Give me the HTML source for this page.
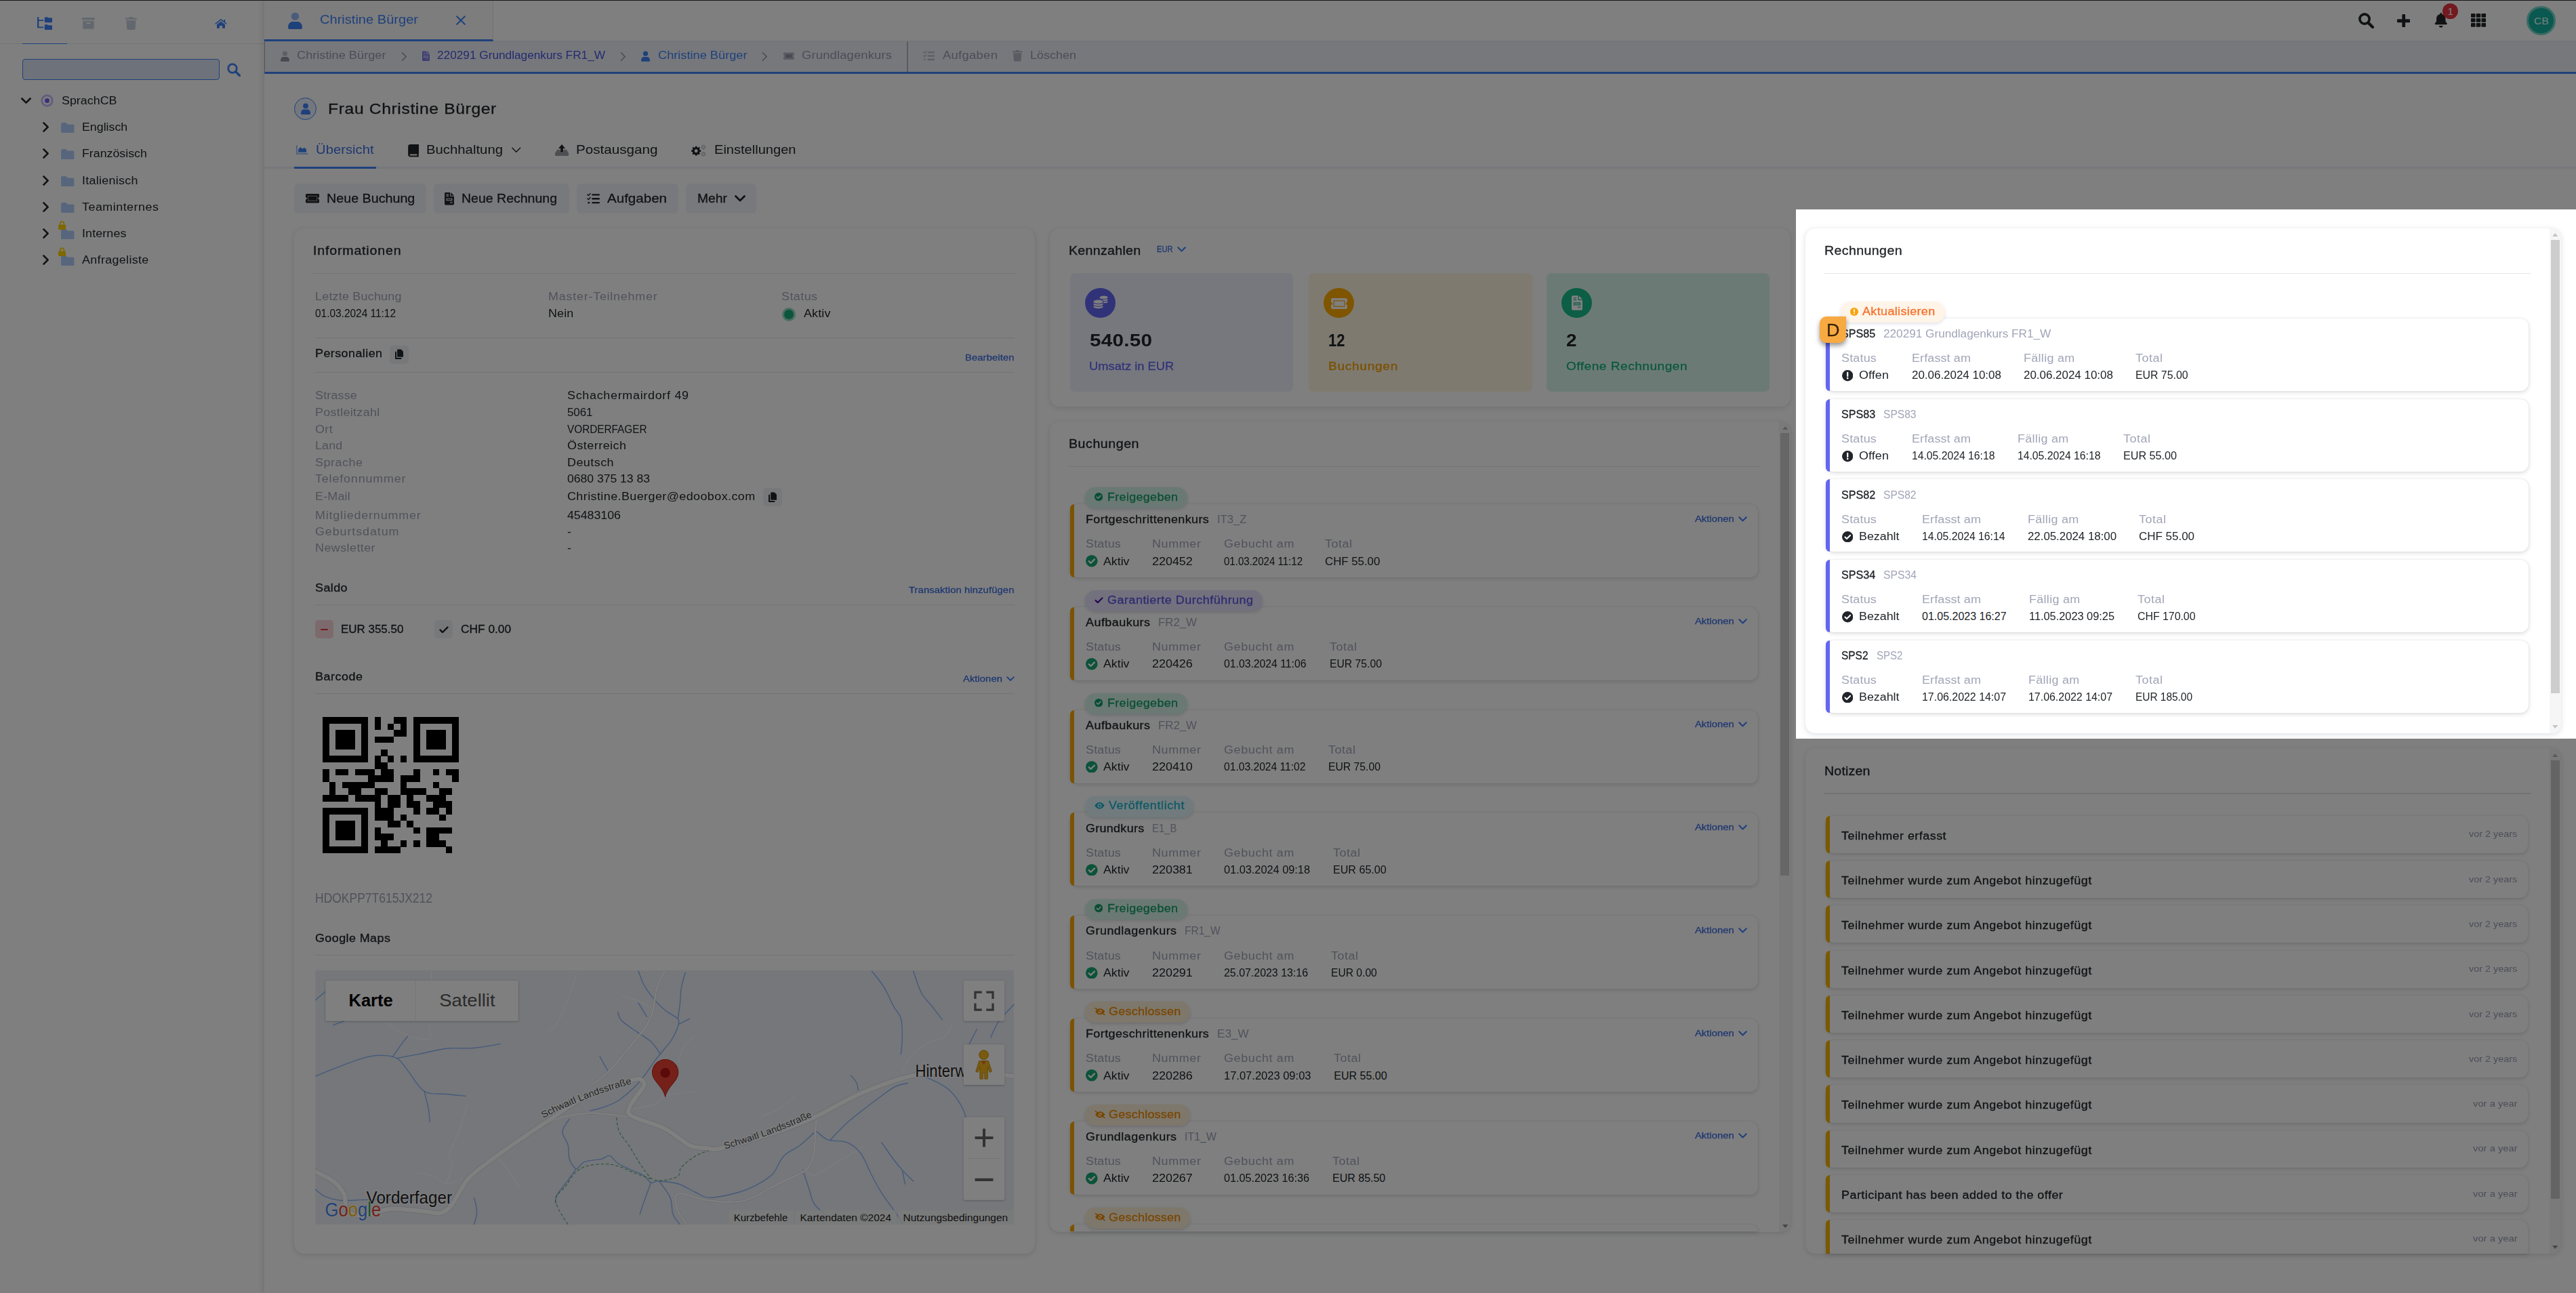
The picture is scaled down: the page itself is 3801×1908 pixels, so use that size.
<!DOCTYPE html>
<html lang="de"><head><meta charset="utf-8"><title>Frau Christine Bürger</title>
<style>
html,body{margin:0;padding:0;}
body{width:3801px;height:1908px;overflow:hidden;position:relative;background:#fff;font-family:"Liberation Sans",sans-serif;}
#root{position:absolute;left:0;top:0;width:3801px;height:1908px;overflow:hidden;}
#root div,#root svg,#root span.t{position:absolute;box-sizing:border-box;}
#root span.t{white-space:nowrap;transform-origin:0 50%;display:block;}
</style></head><body><div id="root">
<div style="left:0.0px;top:0.0px;width:390.0px;height:1908.0px;background:#fff;"></div>
<div style="left:0.0px;top:63.6px;width:390.0px;height:1.2px;background:#e5e6ea;"></div>
<div style="left:33.0px;top:63.6px;width:66.0px;height:1.4px;background:#3f82f7;"></div>
<svg style="left:55.0px;top:24.8px;" width="22.0" height="19.3" viewBox="0 0 22 19"><path d="M0 0h2.300v4h7v1.900h-7v8.400h7v1.900H0z" fill="#3f82f7"/><path d="M11.800 0h3.300l1.300 1.200H21a1 1 0 0 1 1 1V7a1 1 0 0 1-1 1h-9.200a1 1 0 0 1-1-1V1a1 1 0 0 1 1-1zM11.800 11h3.300l1.300 1.200H21a1 1 0 0 1 1 1V18a1 1 0 0 1-1 1h-9.200a1 1 0 0 1-1-1v-6a1 1 0 0 1 1-1z" fill="#3f82f7"/></svg>
<svg style="left:121.0px;top:26.2px;" width="19.0" height="16.8" viewBox="0 0 19 17"><rect x="0" y="0" width="19" height="3.400" rx=".6" fill="#c7cfdc"/><path d="M1.200 4.800h16.600V16a1 1 0 0 1-1 1H2.200a1 1 0 0 1-1-1zM7 7.300a.5.500 0 0 0-.5.500v.700a.5.500 0 0 0 .5.500h5a.5.500 0 0 0 .5-.5v-.7a.5.500 0 0 0-.5-.5z" fill="#c7cfdc" fill-rule="evenodd"/></svg>
<svg style="left:185.2px;top:25.2px;" width="16.8" height="19.0" viewBox="0 0 14 16"><path d="M0 1.200h4.200L5 0h4l.8 1.200H14v1.900H0zM1 4.200h12l-.7 10.300A1.600 1.600 0 0 1 10.700 16H3.300a1.600 1.600 0 0 1-1.600-1.500z" fill="#c7cfdc"/></svg>
<svg style="left:317.0px;top:27.0px;" width="18.0" height="15.5" viewBox="0 0 18 15"><path d="M9 .4L.3 7.600l1 1.200L9 2.500l7.700 6.300 1-1.200-2.500-2V1.700h-2v2.200z" fill="#3f82f7"/><path d="M9 4.200l-6 4.900V14a.6.600 0 0 0 .6.600H7V10.800h4v3.800h3.400a.6.600 0 0 0 .6-.6V9.100z" fill="#3f82f7"/></svg>
<div style="left:33.0px;top:87.0px;width:291.0px;height:30.5px;background:#dce6f7;border:1.500px solid #3f82f7;border-radius:4px;"></div>
<svg style="left:335.0px;top:93.0px;" width="20.0" height="20.0" viewBox="0 0 20 20"><circle cx="8" cy="8" r="6.300" fill="none" stroke="#3f82f7" stroke-width="2.8"/><path d="M12.800 12.800L18.500 18.500" stroke="#3f82f7" stroke-width="3.4" stroke-linecap="round"/></svg>
<svg style="left:31.0px;top:143.5px;" width="15.0" height="9.5" viewBox="0 0 16 10"><path d="M1.5 1.5L8 8l6.5-6.500" fill="none" stroke="#212529" stroke-width="2.8" stroke-linecap="round" stroke-linejoin="round"/></svg>
<svg style="left:60.0px;top:138.5px;" width="19.0" height="19.0" viewBox="0 0 19 19"><circle cx="9.5" cy="9.5" r="7.700" fill="none" stroke="#c9bafc" stroke-width="3"/><circle cx="9.5" cy="9.5" r="3.500" fill="#7260f5"/></svg>
<span class="t" style="left:90.5px;top:137.7px;font-size:16px;line-height:21px;color:#212529;transform:scaleX(1.1176);">SprachCB</span>
<svg style="left:63.0px;top:179.5px;" width="9.5" height="15.0" viewBox="0 0 10 16"><path d="M1.5 1.5L8 8l-6.500 6.500" fill="none" stroke="#212529" stroke-width="2.8" stroke-linecap="round" stroke-linejoin="round"/></svg>
<svg style="left:90.0px;top:180.5px;" width="19.5" height="15.5" viewBox="0 0 20 16"><path d="M2 0h5.500l2.500 2.500H18a2 2 0 0 1 2 2V14a2 2 0 0 1-2 2H2a2 2 0 0 1-2-2V2a2 2 0 0 1 2-2z" fill="#b0cdfb"/></svg>
<span class="t" style="left:120.7px;top:176.7px;font-size:16px;line-height:21px;color:#212529;transform:scaleX(1.1111);">Englisch</span>
<svg style="left:63.0px;top:218.5px;" width="9.5" height="15.0" viewBox="0 0 10 16"><path d="M1.5 1.5L8 8l-6.500 6.500" fill="none" stroke="#212529" stroke-width="2.8" stroke-linecap="round" stroke-linejoin="round"/></svg>
<svg style="left:90.0px;top:219.5px;" width="19.5" height="15.5" viewBox="0 0 20 16"><path d="M2 0h5.500l2.500 2.500H18a2 2 0 0 1 2 2V14a2 2 0 0 1-2 2H2a2 2 0 0 1-2-2V2a2 2 0 0 1 2-2z" fill="#b0cdfb"/></svg>
<span class="t" style="left:120.7px;top:215.7px;font-size:16px;line-height:21px;color:#212529;transform:scaleX(1.1119);">Französisch</span>
<svg style="left:63.0px;top:258.5px;" width="9.5" height="15.0" viewBox="0 0 10 16"><path d="M1.5 1.5L8 8l-6.500 6.500" fill="none" stroke="#212529" stroke-width="2.8" stroke-linecap="round" stroke-linejoin="round"/></svg>
<svg style="left:90.0px;top:259.5px;" width="19.5" height="15.5" viewBox="0 0 20 16"><path d="M2 0h5.500l2.500 2.500H18a2 2 0 0 1 2 2V14a2 2 0 0 1-2 2H2a2 2 0 0 1-2-2V2a2 2 0 0 1 2-2z" fill="#b0cdfb"/></svg>
<span class="t" style="left:120.7px;top:255.7px;font-size:16px;line-height:21px;color:#212529;letter-spacing:0.24px;transform:scaleX(1.1200);">Italienisch</span>
<svg style="left:63.0px;top:297.5px;" width="9.5" height="15.0" viewBox="0 0 10 16"><path d="M1.5 1.5L8 8l-6.500 6.500" fill="none" stroke="#212529" stroke-width="2.8" stroke-linecap="round" stroke-linejoin="round"/></svg>
<svg style="left:90.0px;top:298.5px;" width="19.5" height="15.5" viewBox="0 0 20 16"><path d="M2 0h5.500l2.500 2.500H18a2 2 0 0 1 2 2V14a2 2 0 0 1-2 2H2a2 2 0 0 1-2-2V2a2 2 0 0 1 2-2z" fill="#b0cdfb"/></svg>
<span class="t" style="left:120.7px;top:294.7px;font-size:16px;line-height:21px;color:#212529;letter-spacing:0.43px;transform:scaleX(1.1200);">Teaminternes</span>
<svg style="left:63.0px;top:336.5px;" width="9.5" height="15.0" viewBox="0 0 10 16"><path d="M1.5 1.5L8 8l-6.500 6.500" fill="none" stroke="#212529" stroke-width="2.8" stroke-linecap="round" stroke-linejoin="round"/></svg>
<svg style="left:90.0px;top:337.5px;" width="19.5" height="15.5" viewBox="0 0 20 16"><path d="M2 0h5.500l2.500 2.500H18a2 2 0 0 1 2 2V14a2 2 0 0 1-2 2H2a2 2 0 0 1-2-2V2a2 2 0 0 1 2-2z" fill="#b0cdfb"/></svg>
<svg style="left:85.5px;top:325.5px;" width="11.2" height="13.3" viewBox="0 0 14 16"><path d="M3.500 7V4.500a3.500 3.500 0 0 1 7 0V7" fill="none" stroke="#ffd000" stroke-width="2.2"/><rect x="0" y="6.500" width="14" height="9.500" rx="1.800" fill="#ffd000"/></svg>
<span class="t" style="left:120.7px;top:333.7px;font-size:16px;line-height:21px;color:#212529;letter-spacing:0.09px;transform:scaleX(1.1200);">Internes</span>
<svg style="left:63.0px;top:375.5px;" width="9.5" height="15.0" viewBox="0 0 10 16"><path d="M1.5 1.5L8 8l-6.500 6.500" fill="none" stroke="#212529" stroke-width="2.8" stroke-linecap="round" stroke-linejoin="round"/></svg>
<svg style="left:90.0px;top:376.5px;" width="19.5" height="15.5" viewBox="0 0 20 16"><path d="M2 0h5.500l2.500 2.500H18a2 2 0 0 1 2 2V14a2 2 0 0 1-2 2H2a2 2 0 0 1-2-2V2a2 2 0 0 1 2-2z" fill="#b0cdfb"/></svg>
<svg style="left:85.5px;top:364.5px;" width="11.2" height="13.3" viewBox="0 0 14 16"><path d="M3.500 7V4.500a3.500 3.500 0 0 1 7 0V7" fill="none" stroke="#ffd000" stroke-width="2.2"/><rect x="0" y="6.500" width="14" height="9.500" rx="1.800" fill="#ffd000"/></svg>
<span class="t" style="left:120.7px;top:372.7px;font-size:16px;line-height:21px;color:#212529;letter-spacing:0.30px;transform:scaleX(1.1200);">Anfrageliste</span>
<div style="left:390.0px;top:0.0px;width:3411.0px;height:1908.0px;background:#fff;box-shadow:-3px 0 9px rgba(0,0,0,.10);"></div>
<div style="left:390.0px;top:0.0px;width:3411.0px;height:60.5px;background:#fff;border-bottom:1.200px solid #e5e6ea;"></div>
<div style="left:390.0px;top:0.0px;width:337.5px;height:60.5px;background:#fafafa;border-right:1.200px solid #e5e6ea;border-bottom:3.200px solid #3f82f7;"></div>
<div style="left:0.0px;top:0.0px;width:3801.0px;height:1.4px;background:#2e2e2e;"></div>
<svg style="left:425.0px;top:17.5px;" width="21.0" height="25.0" viewBox="0 0 20 24"><circle cx="10" cy="6" r="5.6" fill="#3f82f7" opacity=".55"/><path d="M0 21.5c0-5.5 3.5-8 6-8h8c2.5 0 6 2.5 6 8 0 1.6-1 2.5-2.5 2.5h-15C1 24 0 23.100 0 21.5z" fill="#3f82f7"/></svg>
<span class="t" style="left:472.0px;top:17.2px;font-size:18.5px;line-height:24px;color:#3f82f7;transform:scaleX(1.0848);">Christine Bürger</span>
<svg style="left:673.0px;top:23.0px;" width="14.0" height="14.0" viewBox="0 0 14 14"><path d="M1.200 1.200l11.600 11.600M12.800 1.200L1.200 12.800" stroke="#3f82f7" stroke-width="2" stroke-linecap="round"/></svg>
<svg style="left:3480.0px;top:19.4px;" width="22.6" height="22.6" viewBox="0 0 20 20"><circle cx="8" cy="8" r="6.300" fill="none" stroke="#212529" stroke-width="3.2"/><path d="M12.800 12.800L18.500 18.500" stroke="#212529" stroke-width="3.8000000000000003" stroke-linecap="round"/></svg>
<svg style="left:3536.8px;top:20.5px;" width="19.5" height="19.5" viewBox="0 0 16 16"><path d="M8 1.300v13.400M1.300 8h13.400" stroke="#212529" stroke-width="3.900" stroke-linecap="round"/></svg>
<svg style="left:3592.0px;top:18.6px;" width="19.5" height="22.0" viewBox="0 0 16 18"><path d="M8 0a1.200 1.200 0 0 1 1.200 1.200v.5A5.500 5.500 0 0 1 13.500 7v3.300l1.800 2.400a.9.900 0 0 1-.7 1.400H1.400a.9.900 0 0 1-.7-1.400l1.800-2.400V7A5.500 5.500 0 0 1 6.800 1.700v-.5A1.200 1.200 0 0 1 8 0z" fill="#212529"/><path d="M5.800 15.500h4.400a2.200 2.200 0 0 1-4.400 0z" fill="#212529"/></svg>
<div style="left:3603.6px;top:4.7px;width:23.4px;height:23.4px;background:#e5343f;border-radius:50%;"></div>
<span class="t" style="left:3611.5px;top:6.8px;font-size:15px;line-height:20px;color:#fff;">1</span>
<svg style="left:3646.0px;top:20.2px;" width="22.0" height="19.8" viewBox="0 0 17.6 15.7"><rect x="0.0" y="0.0" width="5.200" height="4.500" rx=".5" fill="#212529"/><rect x="6.2" y="0.0" width="5.200" height="4.500" rx=".5" fill="#212529"/><rect x="12.4" y="0.0" width="5.200" height="4.500" rx=".5" fill="#212529"/><rect x="0.0" y="5.6" width="5.200" height="4.500" rx=".5" fill="#212529"/><rect x="6.2" y="5.6" width="5.200" height="4.500" rx=".5" fill="#212529"/><rect x="12.4" y="5.6" width="5.200" height="4.500" rx=".5" fill="#212529"/><rect x="0.0" y="11.2" width="5.200" height="4.500" rx=".5" fill="#212529"/><rect x="6.2" y="11.2" width="5.200" height="4.500" rx=".5" fill="#212529"/><rect x="12.4" y="11.2" width="5.200" height="4.500" rx=".5" fill="#212529"/></svg>
<div style="left:3728.4px;top:9.3px;width:42.3px;height:42.3px;background:#14b3a0;border-radius:50%;border:3px solid #74d6c8;"></div>
<span class="t" style="left:3738.5px;top:20.5px;font-size:15.5px;line-height:20px;color:#e8fffb;transform:scaleX(1.0217);">CB</span>
<div style="left:390.0px;top:61.2px;width:3411.0px;height:47.5px;background:#edf1f9;border-bottom:3.200px solid #3f82f7;border-left:1.600px solid #9aa;"></div>
<svg style="left:414.0px;top:74.5px;" width="13.0" height="16.0" viewBox="0 0 20 24"><circle cx="10" cy="6" r="5.6" fill="#8d93a3" opacity=".55"/><path d="M0 21.5c0-5.5 3.5-8 6-8h8c2.5 0 6 2.5 6 8 0 1.6-1 2.5-2.5 2.5h-15C1 24 0 23.100 0 21.5z" fill="#8d93a3"/></svg>
<span class="t" style="left:438.0px;top:71.0px;font-size:16.5px;line-height:21px;color:#969bb0;transform:scaleX(1.1030);">Christine Bürger</span>
<svg style="left:592.0px;top:75.5px;" width="9.0" height="15.0" viewBox="0 0 10 16"><path d="M1.5 1.5L8 8l-6.500 6.500" fill="none" stroke="#8d93a3" stroke-width="1.6" stroke-linecap="round" stroke-linejoin="round"/></svg>
<svg style="left:623.0px;top:74.5px;" width="11.0" height="15.5" viewBox="0 0 12 16"><path d="M1.200 0H7v4.200a.8.800 0 0 0 .8.800H12v9.800A1.200 1.200 0 0 1 10.800 16H1.200A1.200 1.200 0 0 1 0 14.800V1.200A1.200 1.200 0 0 1 1.200 0zM8 0l4 4H8z" fill="#7f7ce6"/><path d="M2 2.200h3.200v1H2zM2 4.200h3.200v1H2zM2.200 7.500h7.600v3.200H2.200zM3.200 8.500v1.200h5.600V8.500zM7 12.300h3v1H7z" fill="#d9d8fb" fill-rule="evenodd"/></svg>
<span class="t" style="left:645.0px;top:71.0px;font-size:16.5px;line-height:21px;color:#4b55dd;transform:scaleX(1.0440);">220291 Grundlagenkurs FR1_W</span>
<svg style="left:915.0px;top:75.5px;" width="9.0" height="15.0" viewBox="0 0 10 16"><path d="M1.5 1.5L8 8l-6.500 6.500" fill="none" stroke="#8d93a3" stroke-width="1.6" stroke-linecap="round" stroke-linejoin="round"/></svg>
<svg style="left:946.0px;top:74.5px;" width="13.0" height="16.0" viewBox="0 0 20 24"><circle cx="10" cy="6" r="5.6" fill="#3f82f7"/><path d="M0 21.5c0-5.5 3.5-8 6-8h8c2.5 0 6 2.5 6 8 0 1.6-1 2.5-2.5 2.5h-15C1 24 0 23.100 0 21.5z" fill="#3f82f7"/></svg>
<span class="t" style="left:970.5px;top:71.0px;font-size:16.5px;line-height:21px;color:#3f82f7;transform:scaleX(1.1030);">Christine Bürger</span>
<svg style="left:1124.0px;top:75.5px;" width="9.0" height="15.0" viewBox="0 0 10 16"><path d="M1.5 1.5L8 8l-6.500 6.500" fill="none" stroke="#8d93a3" stroke-width="1.6" stroke-linecap="round" stroke-linejoin="round"/></svg>
<svg style="left:1156.0px;top:76.5px;" width="16.0" height="11.5" viewBox="0 0 20 13.4"><path d="M1.600 0h16.800A1.600 1.600 0 0 1 20 1.600V5a1.700 1.700 0 0 0 0 3.400v3.400a1.600 1.600 0 0 1-1.600 1.600H1.600A1.600 1.600 0 0 1 0 11.800V8.400A1.700 1.700 0 0 0 0 5V1.600A1.600 1.600 0 0 1 1.600 0z" fill="#b4b9c6"/><rect x="4.200" y="3.600" width="11.600" height="6.200" fill="#8d93a3"/></svg>
<span class="t" style="left:1183.0px;top:71.0px;font-size:16.5px;line-height:21px;color:#969bb0;letter-spacing:0.10px;transform:scaleX(1.1200);">Grundlagenkurs</span>
<div style="left:1338.3px;top:61.2px;width:1.7px;height:44.5px;background:#b3b8c2;"></div>
<svg style="left:1362.0px;top:75.0px;" width="17.0" height="15.0" viewBox="0 0 18 16"><path d="M7 1.200h11v2.200H7zM7 6.900h11v2.200H7zM7 12.600h11v2.200H7z" fill="#b4b9c6"/><path d="M.6 2l1.500 1.500L4.700.700M.6 7.700l1.500 1.500 2.600-2.800" fill="none" stroke="#b4b9c6" stroke-width="1.400" stroke-linecap="round" stroke-linejoin="round"/><circle cx="2.500" cy="13.700" r="1.400" fill="#b4b9c6"/></svg>
<span class="t" style="left:1390.5px;top:71.0px;font-size:16.5px;line-height:21px;color:#969bb0;letter-spacing:0.23px;transform:scaleX(1.1200);">Aufgaben</span>
<svg style="left:1494.0px;top:74.0px;" width="14.5" height="16.5" viewBox="0 0 14 16"><path d="M0 1.200h4.200L5 0h4l.8 1.200H14v1.900H0zM1 4.200h12l-.7 10.300A1.600 1.600 0 0 1 10.700 16H3.300a1.600 1.600 0 0 1-1.600-1.500z" fill="#b4b9c6"/></svg>
<span class="t" style="left:1520.0px;top:71.0px;font-size:16.5px;line-height:21px;color:#969bb0;transform:scaleX(1.0900);">Löschen</span>
<div style="left:434.0px;top:144.0px;width:33.0px;height:33.0px;border:1.600px solid #3f82f7;border-radius:50%;background:#e8effd;"></div>
<svg style="left:443.5px;top:151.5px;" width="14.0" height="17.0" viewBox="0 0 20 24"><circle cx="10" cy="6" r="5.6" fill="#3f82f7"/><path d="M0 21.5c0-5.5 3.5-8 6-8h8c2.5 0 6 2.5 6 8 0 1.6-1 2.5-2.5 2.5h-15C1 24 0 23.100 0 21.5z" fill="#3f82f7"/></svg>
<span class="t" style="left:484.0px;top:145.6px;font-size:22px;line-height:29px;color:#212529;-webkit-text-stroke:.3px #212529;letter-spacing:0.57px;transform:scaleX(1.1200);">Frau Christine Bürger</span>
<div style="left:390.0px;top:246.0px;width:3411.0px;height:3.0px;background:#edf0f6;"></div>
<div style="left:434.0px;top:246.0px;width:121.0px;height:3.0px;background:#3f82f7;"></div>
<svg style="left:437.0px;top:213.5px;" width="17.5" height="14.0" viewBox="0 0 18 14"><path d="M0 0h1.800v12.200H18V14H0z" fill="#3f82f7" opacity=".55"/><path d="M3.300 10.800V6.500L6.500 2.800l3 3 2.800-2.200 3.200 3v4.200z" fill="#3f82f7"/></svg>
<span class="t" style="left:466.0px;top:207.9px;font-size:19px;line-height:25px;color:#3e6fe0;transform:scaleX(1.0667);">Übersicht</span>
<svg style="left:601.7px;top:213.0px;" width="16.5" height="18.5" viewBox="0 0 14 16"><path d="M3 0h10a1 1 0 0 1 1 1v10.500a1 1 0 0 1-.6.900v2.100a.8.800 0 0 1 0 1.500H3a3 3 0 0 1-3-3V3a3 3 0 0 1 3-3zM3 12.500a.9.900 0 0 0 0 1.800h8.400v-1.800z" fill="#212529" fill-rule="evenodd"/></svg>
<span class="t" style="left:629.0px;top:207.9px;font-size:19px;line-height:25px;color:#212529;transform:scaleX(1.0696);">Buchhaltung</span>
<svg style="left:754.0px;top:216.5px;" width="15.5" height="9.0" viewBox="0 0 16 10"><path d="M1.5 1.5L8 8l6.5-6.500" fill="none" stroke="#212529" stroke-width="1.6" stroke-linecap="round" stroke-linejoin="round"/></svg>
<svg style="left:819.0px;top:213.0px;" width="20.0" height="17.3" viewBox="0 0 20 17.2"><path d="M3.200 7.600h3.600l1.200 2.600h4l1.200-2.600h3.600L20 13v2.700a1.500 1.500 0 0 1-1.500 1.500h-17A1.500 1.500 0 0 1 0 15.700V13z" fill="#9a9ea4"/><path d="M10 0l5 6h-3.100v5.200H8.100V6H5z" fill="#212529"/></svg>
<span class="t" style="left:850.0px;top:207.9px;font-size:19px;line-height:25px;color:#212529;transform:scaleX(1.0863);">Postausgang</span>
<svg style="left:1019.5px;top:212.5px;" width="22.5" height="18.4" viewBox="0 0 22 18"><polygon points="13.90,8.32 13.90,10.68 12.33,10.71 11.62,12.41 12.72,13.54 11.04,15.22 9.91,14.12 8.21,14.83 8.18,16.40 5.82,16.40 5.79,14.83 4.09,14.12 2.96,15.22 1.28,13.54 2.38,12.41 1.67,10.71 0.10,10.68 0.10,8.32 1.67,8.29 2.38,6.59 1.28,5.46 2.96,3.78 4.09,4.88 5.79,4.17 5.82,2.60 8.18,2.60 8.21,4.17 9.91,4.88 11.04,3.78 12.72,5.46 11.62,6.59 12.33,8.29" fill="#212529"/><circle cx="7" cy="9.5" r="2.38" fill="#fff"/><polygon points="21.05,3.39 21.05,4.61 20.24,4.62 19.88,5.50 20.44,6.08 19.58,6.94 19.00,6.38 18.12,6.74 18.11,7.55 16.89,7.55 16.88,6.74 16.00,6.38 15.42,6.94 14.56,6.08 15.12,5.50 14.76,4.62 13.95,4.61 13.95,3.39 14.76,3.38 15.12,2.50 14.56,1.92 15.42,1.06 16.00,1.62 16.88,1.26 16.89,0.45 18.11,0.45 18.12,1.26 19.00,1.62 19.58,1.06 20.44,1.92 19.88,2.50 20.24,3.38" fill="#c5c8ce"/><circle cx="17.5" cy="4" r="1.22" fill="#fff"/><polygon points="21.05,13.39 21.05,14.61 20.24,14.62 19.88,15.50 20.44,16.08 19.58,16.94 19.00,16.38 18.12,16.74 18.11,17.55 16.89,17.55 16.88,16.74 16.00,16.38 15.42,16.94 14.56,16.08 15.12,15.50 14.76,14.62 13.95,14.61 13.95,13.39 14.76,13.38 15.12,12.50 14.56,11.92 15.42,11.06 16.00,11.62 16.88,11.26 16.89,10.45 18.11,10.45 18.12,11.26 19.00,11.62 19.58,11.06 20.44,11.92 19.88,12.50 20.24,13.38" fill="#c5c8ce"/><circle cx="17.5" cy="14" r="1.22" fill="#fff"/></svg>
<span class="t" style="left:1053.6px;top:207.9px;font-size:19px;line-height:25px;color:#212529;transform:scaleX(1.0562);">Einstellungen</span>
<div style="left:434.0px;top:271.0px;width:195.0px;height:44.0px;background:#f0f3f8;border-radius:6px;"></div>
<svg style="left:451.0px;top:286.0px;" width="20.1" height="13.5" viewBox="0 0 20 13.4"><path d="M1.600 0h16.800A1.600 1.600 0 0 1 20 1.600V5a1.700 1.700 0 0 0 0 3.400v3.400a1.600 1.600 0 0 1-1.600 1.600H1.600A1.600 1.600 0 0 1 0 11.800V8.400A1.700 1.700 0 0 0 0 5V1.600A1.600 1.600 0 0 1 1.600 0z" fill="#212529"/><rect x="3.400" y="3.200" width="13.200" height="7" fill="none" stroke="rgba(255,255,255,.55)" stroke-width="1"/></svg>
<span class="t" style="left:481.7px;top:280.4px;font-size:19px;line-height:25px;color:#212529;-webkit-text-stroke:.3px #212529;transform:scaleX(1.0365);">Neue Buchung</span>
<div style="left:640.0px;top:271.0px;width:200.0px;height:44.0px;background:#f0f3f8;border-radius:6px;"></div>
<svg style="left:656.0px;top:284.0px;" width="14.0" height="18.5" viewBox="0 0 12 16"><path d="M1.200 0H7v4.200a.8.800 0 0 0 .8.800H12v9.800A1.200 1.200 0 0 1 10.800 16H1.200A1.200 1.200 0 0 1 0 14.800V1.200A1.200 1.200 0 0 1 1.200 0zM8 0l4 4H8z" fill="#212529"/><path d="M2 2.200h3.200v1H2zM2 4.200h3.200v1H2zM2.200 7.500h7.600v3.200H2.200zM3.200 8.500v1.200h5.600V8.500zM7 12.300h3v1H7z" fill="#f0f3f8" fill-rule="evenodd"/></svg>
<span class="t" style="left:681.0px;top:280.4px;font-size:19px;line-height:25px;color:#212529;-webkit-text-stroke:.3px #212529;transform:scaleX(1.0267);">Neue Rechnung</span>
<div style="left:851.0px;top:271.0px;width:150.0px;height:44.0px;background:#f0f3f8;border-radius:6px;"></div>
<svg style="left:866.0px;top:285.0px;" width="19.0" height="16.5" viewBox="0 0 18 16"><path d="M7 1.200h11v2.200H7zM7 6.900h11v2.200H7zM7 12.600h11v2.200H7z" fill="#212529"/><path d="M.6 2l1.500 1.500L4.700.700M.6 7.700l1.500 1.500 2.600-2.800" fill="none" stroke="#212529" stroke-width="1.400" stroke-linecap="round" stroke-linejoin="round"/><circle cx="2.500" cy="13.700" r="1.400" fill="#212529"/></svg>
<span class="t" style="left:896.0px;top:280.4px;font-size:19px;line-height:25px;color:#212529;-webkit-text-stroke:.3px #212529;transform:scaleX(1.0817);">Aufgaben</span>
<div style="left:1011.6px;top:271.0px;width:104.0px;height:44.0px;background:#f0f3f8;border-radius:6px;"></div>
<span class="t" style="left:1028.7px;top:280.4px;font-size:19px;line-height:25px;color:#212529;-webkit-text-stroke:.3px #212529;transform:scaleX(1.0164);">Mehr</span>
<svg style="left:1084.0px;top:288.0px;" width="16.0" height="10.0" viewBox="0 0 16 10"><path d="M1.5 1.5L8 8l6.5-6.500" fill="none" stroke="#212529" stroke-width="2.8" stroke-linecap="round" stroke-linejoin="round"/></svg>
<div style="left:434.0px;top:336.8px;width:1093.0px;height:1512.8px;background:#fff;border-radius:14px;box-shadow:0 2px 9px rgba(50,60,90,.15),0 0 1px rgba(50,60,90,.16);"></div>
<span class="t" style="left:462.0px;top:358.5px;font-size:17.5px;line-height:23px;color:#212529;-webkit-text-stroke:.3px #212529;letter-spacing:0.72px;transform:scaleX(1.1200);">Informationen</span>
<div style="left:462.0px;top:403.0px;width:1037.0px;height:1.3px;background:#e5e6ea;"></div>
<span class="t" style="left:464.8px;top:427.0px;font-size:16px;line-height:21px;color:#a1a5b7;letter-spacing:0.20px;transform:scaleX(1.1200);">Letzte Buchung</span>
<span class="t" style="left:464.8px;top:451.7px;font-size:16px;line-height:21px;color:#212529;transform:scaleX(0.9645);">01.03.2024 11:12</span>
<span class="t" style="left:808.5px;top:427.0px;font-size:16px;line-height:21px;color:#a1a5b7;letter-spacing:0.69px;transform:scaleX(1.1200);">Master-Teilnehmer</span>
<span class="t" style="left:808.5px;top:451.7px;font-size:16px;line-height:21px;color:#212529;letter-spacing:0.14px;transform:scaleX(1.1200);">Nein</span>
<span class="t" style="left:1152.8px;top:427.0px;font-size:16px;line-height:21px;color:#a1a5b7;letter-spacing:0.40px;transform:scaleX(1.1200);">Status</span>
<div style="left:1153.7px;top:453.8px;width:20.5px;height:20.5px;background:#15ab76;border-radius:50%;border:3px solid #93dcc0;"></div>
<span class="t" style="left:1186.3px;top:451.7px;font-size:16px;line-height:21px;color:#212529;letter-spacing:0.12px;transform:scaleX(1.1200);">Aktiv</span>
<div style="left:464.8px;top:498.0px;width:1032.0px;height:1.3px;background:#e5e6ea;"></div>
<span class="t" style="left:464.8px;top:511.0px;font-size:16px;line-height:21px;color:#212529;-webkit-text-stroke:.3px #212529;letter-spacing:0.39px;transform:scaleX(1.1200);">Personalien</span>
<div style="left:575.0px;top:509.6px;width:27.6px;height:27.0px;background:#eef0f5;border-radius:5px;"></div>
<svg style="left:582.5px;top:515.0px;" width="12.5" height="15.5" viewBox="0 0 14 16"><path d="M4.500 0h5.300L14 4.200V11.500a1 1 0 0 1-1 1H4.500a1 1 0 0 1-1-1V1a1 1 0 0 1 1-1z" fill="#212529"/><path d="M0 4.500a1 1 0 0 1 1-1h1.300V13a1 1 0 0 0 1 1h7.200v1a1 1 0 0 1-1 1H1a1 1 0 0 1-1-1z" fill="#212529"/></svg>
<span class="t" style="left:1424.0px;top:519.0px;font-size:13.2px;line-height:17px;color:#3e6fe0;-webkit-text-stroke:.3px #3e6fe0;letter-spacing:0.10px;transform:scaleX(1.1200);">Bearbeiten</span>
<div style="left:464.8px;top:548.8px;width:1032.0px;height:1.3px;background:#e5e6ea;"></div>
<span class="t" style="left:464.8px;top:572.9px;font-size:16px;line-height:21px;color:#a1a5b7;letter-spacing:0.16px;transform:scaleX(1.1200);">Strasse</span>
<span class="t" style="left:837.0px;top:572.9px;font-size:16px;line-height:21px;color:#212529;letter-spacing:0.63px;transform:scaleX(1.1200);">Schachermairdorf 49</span>
<span class="t" style="left:464.8px;top:597.7px;font-size:16px;line-height:21px;color:#a1a5b7;letter-spacing:0.29px;transform:scaleX(1.1200);">Postleitzahl</span>
<span class="t" style="left:837.0px;top:597.7px;font-size:16px;line-height:21px;color:#212529;transform:scaleX(1.0535);">5061</span>
<span class="t" style="left:464.8px;top:622.7px;font-size:16px;line-height:21px;color:#a1a5b7;letter-spacing:0.33px;transform:scaleX(1.1200);">Ort</span>
<span class="t" style="left:837.0px;top:622.7px;font-size:16px;line-height:21px;color:#212529;transform:scaleX(0.9577);">VORDERFAGER</span>
<span class="t" style="left:464.8px;top:646.5px;font-size:16px;line-height:21px;color:#a1a5b7;letter-spacing:0.14px;transform:scaleX(1.1200);">Land</span>
<span class="t" style="left:837.0px;top:646.5px;font-size:16px;line-height:21px;color:#212529;letter-spacing:0.43px;transform:scaleX(1.1200);">Österreich</span>
<span class="t" style="left:464.8px;top:671.7px;font-size:16px;line-height:21px;color:#a1a5b7;letter-spacing:0.48px;transform:scaleX(1.1200);">Sprache</span>
<span class="t" style="left:837.0px;top:671.7px;font-size:16px;line-height:21px;color:#212529;letter-spacing:0.42px;transform:scaleX(1.1200);">Deutsch</span>
<span class="t" style="left:464.8px;top:696.4px;font-size:16px;line-height:21px;color:#a1a5b7;letter-spacing:0.75px;transform:scaleX(1.1200);">Telefonnummer</span>
<span class="t" style="left:837.0px;top:696.4px;font-size:16px;line-height:21px;color:#212529;transform:scaleX(1.0969);">0680 375 13 83</span>
<span class="t" style="left:464.8px;top:722.2px;font-size:16px;line-height:21px;color:#a1a5b7;letter-spacing:0.18px;transform:scaleX(1.1200);">E-Mail</span>
<span class="t" style="left:837.0px;top:722.2px;font-size:16px;line-height:21px;color:#212529;letter-spacing:0.38px;transform:scaleX(1.1200);">Christine.Buerger@edoobox.com</span>
<span class="t" style="left:464.8px;top:749.7px;font-size:16px;line-height:21px;color:#a1a5b7;letter-spacing:0.73px;transform:scaleX(1.1200);">Mitgliedernummer</span>
<span class="t" style="left:837.0px;top:749.7px;font-size:16px;line-height:21px;color:#212529;transform:scaleX(1.1097);">45483106</span>
<span class="t" style="left:464.8px;top:773.5px;font-size:16px;line-height:21px;color:#a1a5b7;letter-spacing:0.81px;transform:scaleX(1.1200);">Geburtsdatum</span>
<span class="t" style="left:837.0px;top:773.5px;font-size:16px;line-height:21px;color:#212529;letter-spacing:1.81px;transform:scaleX(1.1200);">-</span>
<span class="t" style="left:464.8px;top:798.2px;font-size:16px;line-height:21px;color:#a1a5b7;letter-spacing:0.39px;transform:scaleX(1.1200);">Newsletter</span>
<span class="t" style="left:837.0px;top:798.2px;font-size:16px;line-height:21px;color:#212529;letter-spacing:1.81px;transform:scaleX(1.1200);">-</span>
<div style="left:1126.0px;top:720.0px;width:27.6px;height:27.0px;background:#eef0f5;border-radius:5px;"></div>
<svg style="left:1133.5px;top:725.5px;" width="12.5" height="15.5" viewBox="0 0 14 16"><path d="M4.500 0h5.300L14 4.200V11.500a1 1 0 0 1-1 1H4.500a1 1 0 0 1-1-1V1a1 1 0 0 1 1-1z" fill="#212529"/><path d="M0 4.500a1 1 0 0 1 1-1h1.300V13a1 1 0 0 0 1 1h7.200v1a1 1 0 0 1-1 1H1a1 1 0 0 1-1-1z" fill="#212529"/></svg>
<span class="t" style="left:464.8px;top:856.9px;font-size:16px;line-height:21px;color:#212529;-webkit-text-stroke:.3px #212529;letter-spacing:0.39px;transform:scaleX(1.1200);">Saldo</span>
<span class="t" style="left:1341.0px;top:861.7px;font-size:13.2px;line-height:17px;color:#3e6fe0;-webkit-text-stroke:.3px #3e6fe0;letter-spacing:0.10px;transform:scaleX(1.1200);">Transaktion hinzufügen</span>
<div style="left:464.8px;top:892.0px;width:1032.0px;height:1.3px;background:#e5e6ea;"></div>
<div style="left:464.8px;top:915.2px;width:27.0px;height:27.0px;background:#fbd5da;border-radius:5px;"></div>
<div style="left:472.5px;top:927.6px;width:11.5px;height:2.6px;background:#e5343f;border-radius:1px;"></div>
<span class="t" style="left:503.4px;top:918.2px;font-size:16px;line-height:21px;color:#212529;-webkit-text-stroke:.3px #212529;transform:scaleX(1.0589);">EUR 355.50</span>
<div style="left:640.8px;top:915.2px;width:27.0px;height:27.0px;background:#eef0f5;border-radius:5px;"></div>
<svg style="left:647.5px;top:923.5px;" width="14.0" height="10.5" viewBox="0 0 16 12"><path d="M1.800 6.300l4 4 8.400-8.500" fill="none" stroke="#212529" stroke-width="2.8" stroke-linecap="round" stroke-linejoin="round"/></svg>
<span class="t" style="left:679.5px;top:918.2px;font-size:16px;line-height:21px;color:#212529;-webkit-text-stroke:.3px #212529;transform:scaleX(1.0822);">CHF 0.00</span>
<span class="t" style="left:464.8px;top:987.7px;font-size:16px;line-height:21px;color:#212529;-webkit-text-stroke:.3px #212529;letter-spacing:0.48px;transform:scaleX(1.1200);">Barcode</span>
<span class="t" style="left:1421.0px;top:992.7px;font-size:13.2px;line-height:17px;color:#3e6fe0;-webkit-text-stroke:.3px #3e6fe0;letter-spacing:0.05px;transform:scaleX(1.1200);">Aktionen</span>
<svg style="left:1484.5px;top:997.5px;" width="12.0" height="7.5" viewBox="0 0 16 10"><path d="M1.5 1.5L8 8l6.5-6.500" fill="none" stroke="#3f82f7" stroke-width="2.4" stroke-linecap="round" stroke-linejoin="round"/></svg>
<div style="left:464.8px;top:1023.0px;width:1032.0px;height:1.3px;background:#e5e6ea;"></div>
<svg style="left:475.9px;top:1058.0px;" width="201.0" height="201.0" viewBox="0 0 21 21"><g fill="#000" shape-rendering="crispEdges"><rect x="0" y="0" width="7" height="1.02"/><rect x="8" y="0" width="1" height="1.02"/><rect x="11" y="0" width="2" height="1.02"/><rect x="14" y="0" width="7" height="1.02"/><rect x="0" y="1" width="1" height="1.02"/><rect x="6" y="1" width="1" height="1.02"/><rect x="8" y="1" width="1" height="1.02"/><rect x="10" y="1" width="1" height="1.02"/><rect x="12" y="1" width="1" height="1.02"/><rect x="14" y="1" width="1" height="1.02"/><rect x="20" y="1" width="1" height="1.02"/><rect x="0" y="2" width="1" height="1.02"/><rect x="2" y="2" width="3" height="1.02"/><rect x="6" y="2" width="1" height="1.02"/><rect x="11" y="2" width="2" height="1.02"/><rect x="14" y="2" width="1" height="1.02"/><rect x="16" y="2" width="3" height="1.02"/><rect x="20" y="2" width="1" height="1.02"/><rect x="0" y="3" width="1" height="1.02"/><rect x="2" y="3" width="3" height="1.02"/><rect x="6" y="3" width="1" height="1.02"/><rect x="8" y="3" width="3" height="1.02"/><rect x="14" y="3" width="1" height="1.02"/><rect x="16" y="3" width="3" height="1.02"/><rect x="20" y="3" width="1" height="1.02"/><rect x="0" y="4" width="1" height="1.02"/><rect x="2" y="4" width="3" height="1.02"/><rect x="6" y="4" width="1" height="1.02"/><rect x="14" y="4" width="1" height="1.02"/><rect x="16" y="4" width="3" height="1.02"/><rect x="20" y="4" width="1" height="1.02"/><rect x="0" y="5" width="1" height="1.02"/><rect x="6" y="5" width="1" height="1.02"/><rect x="9" y="5" width="1" height="1.02"/><rect x="14" y="5" width="1" height="1.02"/><rect x="20" y="5" width="1" height="1.02"/><rect x="0" y="6" width="7" height="1.02"/><rect x="8" y="6" width="1" height="1.02"/><rect x="10" y="6" width="1" height="1.02"/><rect x="12" y="6" width="1" height="1.02"/><rect x="14" y="6" width="7" height="1.02"/><rect x="8" y="7" width="2" height="1.02"/><rect x="0" y="8" width="1" height="1.02"/><rect x="2" y="8" width="2" height="1.02"/><rect x="5" y="8" width="3" height="1.02"/><rect x="9" y="8" width="2" height="1.02"/><rect x="14" y="8" width="1" height="1.02"/><rect x="17" y="8" width="1" height="1.02"/><rect x="19" y="8" width="2" height="1.02"/><rect x="0" y="9" width="1" height="1.02"/><rect x="7" y="9" width="4" height="1.02"/><rect x="12" y="9" width="3" height="1.02"/><rect x="20" y="9" width="1" height="1.02"/><rect x="1" y="10" width="1" height="1.02"/><rect x="3" y="10" width="5" height="1.02"/><rect x="12" y="10" width="1" height="1.02"/><rect x="17" y="10" width="1" height="1.02"/><rect x="1" y="11" width="1" height="1.02"/><rect x="4" y="11" width="2" height="1.02"/><rect x="8" y="11" width="2" height="1.02"/><rect x="12" y="11" width="4" height="1.02"/><rect x="18" y="11" width="2" height="1.02"/><rect x="0" y="12" width="4" height="1.02"/><rect x="5" y="12" width="4" height="1.02"/><rect x="10" y="12" width="2" height="1.02"/><rect x="13" y="12" width="1" height="1.02"/><rect x="16" y="12" width="3" height="1.02"/><rect x="8" y="13" width="1" height="1.02"/><rect x="10" y="13" width="2" height="1.02"/><rect x="13" y="13" width="2" height="1.02"/><rect x="17" y="13" width="3" height="1.02"/><rect x="0" y="14" width="7" height="1.02"/><rect x="8" y="14" width="3" height="1.02"/><rect x="14" y="14" width="1" height="1.02"/><rect x="16" y="14" width="2" height="1.02"/><rect x="19" y="14" width="1" height="1.02"/><rect x="0" y="15" width="1" height="1.02"/><rect x="6" y="15" width="1" height="1.02"/><rect x="8" y="15" width="3" height="1.02"/><rect x="12" y="15" width="1" height="1.02"/><rect x="18" y="15" width="1" height="1.02"/><rect x="0" y="16" width="1" height="1.02"/><rect x="2" y="16" width="3" height="1.02"/><rect x="6" y="16" width="1" height="1.02"/><rect x="10" y="16" width="2" height="1.02"/><rect x="13" y="16" width="1" height="1.02"/><rect x="0" y="17" width="1" height="1.02"/><rect x="2" y="17" width="3" height="1.02"/><rect x="6" y="17" width="1" height="1.02"/><rect x="8" y="17" width="1" height="1.02"/><rect x="14" y="17" width="1" height="1.02"/><rect x="16" y="17" width="4" height="1.02"/><rect x="0" y="18" width="1" height="1.02"/><rect x="2" y="18" width="3" height="1.02"/><rect x="6" y="18" width="1" height="1.02"/><rect x="8" y="18" width="3" height="1.02"/><rect x="16" y="18" width="2" height="1.02"/><rect x="0" y="19" width="1" height="1.02"/><rect x="6" y="19" width="1" height="1.02"/><rect x="9" y="19" width="1" height="1.02"/><rect x="12" y="19" width="1" height="1.02"/><rect x="14" y="19" width="1" height="1.02"/><rect x="16" y="19" width="3" height="1.02"/><rect x="0" y="20" width="7" height="1.02"/><rect x="8" y="20" width="4" height="1.02"/><rect x="19" y="20" width="1" height="1.02"/></g></svg>
<span class="t" style="left:465.0px;top:1313.3px;font-size:19.5px;line-height:25px;color:#a1a5b7;transform:scaleX(0.8967);">HDOKPP7T615JX212</span>
<span class="t" style="left:465.0px;top:1373.9px;font-size:16px;line-height:21px;color:#212529;-webkit-text-stroke:.3px #212529;letter-spacing:0.38px;transform:scaleX(1.1200);">Google Maps</span>
<div style="left:464.8px;top:1409.0px;width:1032.0px;height:1.3px;background:#e5e6ea;"></div>
<svg style="left:455.0px;top:1425.0px;" width="1050.0" height="390.1" viewBox="0 0 2576 957"><defs><clipPath id="mc"><rect x="25" y="17" width="2530" height="920"/></clipPath></defs><g clip-path="url(#mc)"><rect x="25" y="17" width="2530" height="920" fill="#eaeef4"/><path d="M445 20C445 27 446 47 445 60C444 73 441 93 440 100" fill="none" stroke="#fbfcfe" stroke-width="2.500"/><path d="M970 30C965 45 952 90 940 120C928 150 912 190 900 210C888 230 871 233 865 238" fill="none" stroke="#fbfcfe" stroke-width="2.500"/><path d="M1400 255C1393 261 1370 274 1360 290C1350 306 1343 340 1340 350" fill="none" stroke="#fbfcfe" stroke-width="2.500"/><path d="M1172 520C1187 517 1240 508 1260 500C1280 492 1267 480 1290 472C1313 464 1382 458 1400 455" fill="none" stroke="#fbfcfe" stroke-width="2.500"/><path d="M575 500C570 517 556 570 545 600C534 630 514 660 510 680C506 700 522 702 520 720C518 738 503 778 500 790" fill="none" stroke="#fbfcfe" stroke-width="2.500"/><path d="M690 700C697 708 718 733 730 750C742 767 759 792 765 800" fill="none" stroke="#fbfcfe" stroke-width="2.500"/><path d="M385 750C396 752 431 753 450 760C469 767 482 788 500 790C518 792 550 773 560 770" fill="none" stroke="#fbfcfe" stroke-width="2.500"/><path d="M2015 650C1996 662 1931 702 1900 720C1869 738 1847 757 1830 760C1813 763 1805 743 1800 740" fill="none" stroke="#fbfcfe" stroke-width="2.500"/><path d="M2330 215C2325 222 2315 249 2300 260C2285 271 2260 268 2240 280C2220 292 2195 312 2180 330C2165 348 2155 380 2150 390" fill="none" stroke="#fbfcfe" stroke-width="2.500"/><path d="M1135 110C1146 113 1181 122 1200 130C1219 138 1242 155 1250 160" fill="none" stroke="#fbfcfe" stroke-width="2.500"/><path d="M1760 475C1750 482 1720 508 1700 520C1680 532 1650 541 1640 545" fill="none" stroke="#fbfcfe" stroke-width="2.500"/><path d="M280 205C288 211 313 231 330 240C347 249 362 256 380 260C398 264 431 272 440 265C449 258 436 223 435 215" fill="none" stroke="#fbfcfe" stroke-width="2.500"/><path d="M25 400C38 395 74 380 100 370C126 360 155 348 180 340C205 332 227 326 250 325C273 324 302 326 320 335C338 344 343 360 360 380C377 400 397 441 420 455C443 469 475 462 500 465C525 468 558 471 570 472" fill="none" stroke="#8ab4f8" stroke-width="3.400" stroke-linecap="round"/><path d="M305 330C311 322 331 292 340 280C349 268 357 259 360 255" fill="none" stroke="#8ab4f8" stroke-width="3.400" stroke-linecap="round"/><path d="M320 335C333 332 370 326 400 320C430 314 467 304 500 300C533 296 568 301 600 298C632 295 679 286 695 283" fill="none" stroke="#8ab4f8" stroke-width="3.400" stroke-linecap="round"/><path d="M420 455C422 466 432 502 435 520C438 538 439 558 440 565" fill="none" stroke="#8ab4f8" stroke-width="3.400" stroke-linecap="round"/><path d="M25 125 L60 95" fill="none" stroke="#8ab4f8" stroke-width="3.400" stroke-linecap="round"/><path d="M90 215 L130 200" fill="none" stroke="#8ab4f8" stroke-width="3.400" stroke-linecap="round"/><path d="M1195 20C1198 28 1206 53 1215 70C1224 87 1238 105 1250 120C1262 135 1276 148 1290 160C1304 172 1327 182 1335 190C1343 198 1342 198 1340 210C1338 222 1328 245 1320 260C1312 275 1302 285 1290 300C1278 315 1262 333 1250 350C1238 367 1227 385 1215 400C1203 415 1196 425 1180 440C1164 455 1140 478 1120 490C1100 502 1077 509 1060 515C1043 521 1027 523 1020 525" fill="none" stroke="#8ab4f8" stroke-width="3.400" stroke-linecap="round"/><path d="M1365 25C1362 34 1353 61 1350 80C1347 99 1347 122 1345 140C1343 158 1339 182 1338 190" fill="none" stroke="#8ab4f8" stroke-width="3.400" stroke-linecap="round"/><path d="M1340 212 L1380 192" fill="none" stroke="#8ab4f8" stroke-width="3.400" stroke-linecap="round"/><path d="M1120 168C1122 173 1123 188 1135 200C1147 212 1172 228 1190 240C1208 252 1226 262 1240 275C1254 288 1269 312 1275 320" fill="none" stroke="#8ab4f8" stroke-width="3.400" stroke-linecap="round"/><path d="M1195 135 L1225 185" fill="none" stroke="#8ab4f8" stroke-width="3.400" stroke-linecap="round"/><path d="M1055 328C1058 334 1070 356 1075 365C1080 374 1083 378 1085 380" fill="none" stroke="#8ab4f8" stroke-width="3.400" stroke-linecap="round"/><path d="M2040 20C2048 30 2072 58 2085 80C2098 102 2110 132 2120 150C2130 168 2140 172 2145 190C2150 208 2150 238 2150 260C2150 282 2146 310 2145 320" fill="none" stroke="#8ab4f8" stroke-width="3.400" stroke-linecap="round"/><path d="M2190 20C2195 33 2208 78 2220 100C2232 122 2248 134 2260 150C2272 166 2289 188 2295 195" fill="none" stroke="#8ab4f8" stroke-width="3.400" stroke-linecap="round"/><path d="M2420 230C2415 240 2398 271 2390 290C2382 309 2378 336 2375 345" fill="none" stroke="#8ab4f8" stroke-width="3.400" stroke-linecap="round"/><path d="M1965 398C1968 402 1981 416 1985 425C1989 434 1989 446 1990 450" fill="none" stroke="#8ab4f8" stroke-width="3.400" stroke-linecap="round"/><path d="M1840 600C1847 605 1862 623 1880 630C1898 637 1930 632 1950 640C1970 648 1985 660 2000 680C2015 700 2027 735 2040 760C2053 785 2065 807 2080 830C2095 853 2118 882 2130 900C2142 918 2147 931 2150 937" fill="none" stroke="#8ab4f8" stroke-width="3.400" stroke-linecap="round"/><path d="M2075 640C2081 648 2098 673 2110 690C2122 707 2137 725 2150 740C2163 755 2183 773 2190 780" fill="none" stroke="#8ab4f8" stroke-width="3.400" stroke-linecap="round"/><path d="M2150 740 L2160 790" fill="none" stroke="#8ab4f8" stroke-width="3.400" stroke-linecap="round"/><path d="M2200 395C2208 398 2230 401 2250 410C2270 419 2300 432 2320 450C2340 468 2358 495 2370 520C2382 545 2387 587 2390 600" fill="none" stroke="#8ab4f8" stroke-width="3.400" stroke-linecap="round"/><path d="M1890 630C1902 618 1933 583 1960 560C1987 537 2023 510 2050 490C2077 470 2100 451 2120 440C2140 429 2162 428 2170 425" fill="none" stroke="#8ab4f8" stroke-width="3.400" stroke-linecap="round"/><path d="M945 555C941 562 921 584 920 600C919 616 936 633 940 650C944 667 940 686 945 700C950 714 961 733 970 735C979 737 985 716 1000 710C1015 704 1045 704 1060 700C1075 696 1080 686 1090 688C1100 690 1107 706 1120 715C1133 724 1154 732 1170 740C1186 748 1203 752 1215 760C1227 768 1231 782 1240 785C1249 788 1253 779 1270 780C1287 781 1318 783 1340 790C1362 797 1382 812 1400 820C1418 828 1427 839 1450 840C1473 841 1512 832 1540 825C1568 818 1597 807 1620 795C1643 783 1663 772 1680 755C1697 738 1703 708 1720 690C1737 672 1762 664 1780 650C1798 636 1822 612 1830 605" fill="none" stroke="#8ab4f8" stroke-width="3.400" stroke-linecap="round"/><path d="M970 735C963 744 942 774 930 790C918 806 906 818 900 830C894 842 896 855 895 860" fill="none" stroke="#8ab4f8" stroke-width="3.400" stroke-linecap="round"/><path d="M1240 785C1237 794 1227 821 1220 840C1213 859 1203 890 1200 900" fill="none" stroke="#8ab4f8" stroke-width="3.400" stroke-linecap="round"/><path d="M1270 780C1277 790 1302 820 1310 840C1318 860 1314 884 1320 900C1326 916 1341 931 1345 937" fill="none" stroke="#8ab4f8" stroke-width="3.400" stroke-linecap="round"/><path d="M1790 740C1793 750 1803 780 1810 800C1817 820 1820 843 1830 860C1840 877 1863 893 1870 900" fill="none" stroke="#8ab4f8" stroke-width="3.400" stroke-linecap="round"/><path d="M600 840C602 848 610 874 610 890C610 906 602 929 600 937" fill="none" stroke="#8ab4f8" stroke-width="3.400" stroke-linecap="round"/><path d="M25 810C31 814 44 828 60 835C76 842 98 848 120 850C142 852 160 849 190 848C220 847 268 846 300 846C332 846 367 849 380 850" fill="none" stroke="#8ab4f8" stroke-width="3.400" stroke-linecap="round"/><path d="M2555 140C2546 150 2514 180 2500 200C2486 220 2475 250 2470 260" fill="none" stroke="#8ab4f8" stroke-width="3.400" stroke-linecap="round"/><path d="M1115 550C1117 558 1118 583 1125 600C1132 617 1149 633 1160 650C1171 667 1180 684 1190 700C1200 716 1210 732 1220 745C1230 758 1237 770 1250 775C1263 780 1285 778 1300 775C1315 772 1332 768 1340 760C1348 752 1340 742 1350 730C1360 718 1383 700 1400 690C1417 680 1433 675 1450 670C1467 665 1492 663 1500 662" fill="none" stroke="#55a867" stroke-width="2.600" stroke-dasharray="11 7"/><path d="M1240 772C1230 768 1200 758 1180 750C1160 742 1138 730 1120 725C1102 720 1088 718 1070 718C1052 718 1028 720 1010 725C992 730 978 738 965 750C952 762 942 785 930 800C918 815 899 827 895 840C891 853 898 864 905 880C912 896 934 928 940 937" fill="none" stroke="#55a867" stroke-width="2.600" stroke-dasharray="11 7"/><path d="M780 620C800 609 863 569 900 555C937 541 973 538 1000 535C1027 532 1033 533 1060 535C1087 537 1143 545 1160 547" fill="none" stroke="#d7dbe2" stroke-width="8.500" stroke-linecap="round"/><path d="M1290 20C1285 30 1270 55 1262 80C1254 105 1253 145 1245 170C1237 195 1231 207 1215 230C1199 253 1172 284 1150 310C1128 336 1105 365 1085 385C1065 405 1039 422 1030 430" fill="none" stroke="#d7dbe2" stroke-width="8.500" stroke-linecap="round"/><path d="M1840 545C1839 554 1837 578 1835 600C1833 622 1836 657 1830 680C1824 703 1822 722 1800 740C1778 758 1737 772 1700 790C1663 808 1622 840 1580 850C1538 860 1490 854 1450 850C1410 846 1359 820 1340 825C1321 830 1330 861 1335 880C1340 899 1364 928 1370 937" fill="none" stroke="#d7dbe2" stroke-width="8.500" stroke-linecap="round"/><path d="M780 620C800 609 863 569 900 555C937 541 973 538 1000 535C1027 532 1033 533 1060 535C1087 537 1143 545 1160 547" fill="none" stroke="#fff" stroke-width="5.500" stroke-linecap="round"/><path d="M1290 20C1285 30 1270 55 1262 80C1254 105 1253 145 1245 170C1237 195 1231 207 1215 230C1199 253 1172 284 1150 310C1128 336 1105 365 1085 385C1065 405 1039 422 1030 430" fill="none" stroke="#fff" stroke-width="5.500" stroke-linecap="round"/><path d="M1840 545C1839 554 1837 578 1835 600C1833 622 1836 657 1830 680C1824 703 1822 722 1800 740C1778 758 1737 772 1700 790C1663 808 1622 840 1580 850C1538 860 1490 854 1450 850C1410 846 1359 820 1340 825C1321 830 1330 861 1335 880C1340 899 1364 928 1370 937" fill="none" stroke="#fff" stroke-width="5.500" stroke-linecap="round"/><path d="M440 892C447 892 467 900 480 895C493 890 503 886 520 865C537 844 553 799 580 770C607 741 647 715 680 690C713 665 748 642 780 620C812 598 833 584 870 560C907 536 950 502 1000 478C1050 454 1136 426 1170 415C1204 404 1198 410 1205 413C1212 416 1218 426 1215 435C1212 444 1199 457 1190 470C1181 483 1165 502 1162 515C1159 528 1151 532 1172 545C1193 558 1255 572 1290 590C1325 608 1355 638 1380 650C1405 662 1420 658 1440 660C1460 662 1457 670 1500 660C1543 650 1643 619 1700 600C1757 581 1790 568 1840 545C1890 522 1940 487 2000 462C2060 437 2133 408 2200 395C2267 382 2341 384 2400 385C2459 386 2529 398 2555 400" fill="none" stroke="#d3d7df" stroke-width="19" stroke-linecap="round"/><path d="M25 745C36 751 72 766 90 780C108 794 122 812 130 830C138 848 128 872 140 885C152 898 173 906 200 905C227 904 260 882 300 880C340 878 417 890 440 892" fill="none" stroke="#d3d7df" stroke-width="19" stroke-linecap="round"/><path d="M440 892C447 892 467 900 480 895C493 890 503 886 520 865C537 844 553 799 580 770C607 741 647 715 680 690C713 665 748 642 780 620C812 598 833 584 870 560C907 536 950 502 1000 478C1050 454 1136 426 1170 415C1204 404 1198 410 1205 413C1212 416 1218 426 1215 435C1212 444 1199 457 1190 470C1181 483 1165 502 1162 515C1159 528 1151 532 1172 545C1193 558 1255 572 1290 590C1325 608 1355 638 1380 650C1405 662 1420 658 1440 660C1460 662 1457 670 1500 660C1543 650 1643 619 1700 600C1757 581 1790 568 1840 545C1890 522 1940 487 2000 462C2060 437 2133 408 2200 395C2267 382 2341 384 2400 385C2459 386 2529 398 2555 400" fill="none" stroke="#fff" stroke-width="15" stroke-linecap="round"/><path d="M25 745C36 751 72 766 90 780C108 794 122 812 130 830C138 848 128 872 140 885C152 898 173 906 200 905C227 904 260 882 300 880C340 878 417 890 440 892" fill="none" stroke="#fff" stroke-width="15" stroke-linecap="round"/><path id="rp1" d="M850 552 Q1010 470 1180 425" fill="none"/><path id="rp2" d="M1508 664 Q1690 610 1826 546" fill="none"/><text style="font-family:&quot;Liberation Sans&quot;,sans-serif;font-size:34px;" fill="#4a4d52" stroke="#fff" stroke-width="7" stroke-linejoin="round" paint-order="stroke" textLength="345" lengthAdjust="spacingAndGlyphs"><textPath href="#rp1">Schwaitl Landsstraße</textPath></text><text style="font-family:&quot;Liberation Sans&quot;,sans-serif;font-size:34px;" fill="#4a4d52" stroke="#fff" stroke-width="7" stroke-linejoin="round" paint-order="stroke" textLength="338" lengthAdjust="spacingAndGlyphs"><textPath href="#rp2">Schwaitl Landsstraße</textPath></text><text x="210" y="860" style="font-family:&quot;Liberation Sans&quot;,sans-serif;font-size:62px;" fill="#1f2124" stroke="#fff" stroke-width="6" stroke-linejoin="round" paint-order="stroke" textLength="310" lengthAdjust="spacingAndGlyphs">Vorderfager</text><text x="2197" y="402" style="font-family:&quot;Liberation Sans&quot;,sans-serif;font-size:62px;" fill="#1f2124" stroke="#fff" stroke-width="6" stroke-linejoin="round" paint-order="stroke" textLength="265" lengthAdjust="spacingAndGlyphs" clip-path="url(#hc)">Hinterwinkl</text><defs><clipPath id="hc"><rect x="2100" y="300" width="272" height="160"/></clipPath></defs><path d="M1292 475c-6-40-47-55-47-88a47 47 0 0 1 94 0c0 33-41 48-47 88z" fill="#ea4335" stroke="#c5221f" stroke-width="2.500"/><circle cx="1292" cy="388" r="18" fill="#b31412"/><text x="60" y="908" style="font-family:&quot;Liberation Sans&quot;,sans-serif;font-size:72px;" textLength="203" lengthAdjust="spacingAndGlyphs" stroke="#fff" stroke-width="5" stroke-linejoin="round" paint-order="stroke"><tspan fill="#4285f4">G</tspan><tspan fill="#ea4335">o</tspan><tspan fill="#fbbc04">o</tspan><tspan fill="#4285f4">g</tspan><tspan fill="#34a853">l</tspan><tspan fill="#ea4335">e</tspan></text><rect x="1522" y="885" width="235" height="52" fill="#f5f5f5" opacity=".75"/><rect x="1762" y="885" width="368" height="52" fill="#f5f5f5" opacity=".75"/><rect x="2135" y="885" width="420" height="52" fill="#f5f5f5" opacity=".75"/><text x="1540" y="925" style="font-family:&quot;Liberation Sans&quot;,sans-serif;font-size:34px;" fill="#222" textLength="195" lengthAdjust="spacingAndGlyphs">Kurzbefehle</text><text x="1780" y="925" style="font-family:&quot;Liberation Sans&quot;,sans-serif;font-size:34px;" fill="#222" textLength="330" lengthAdjust="spacingAndGlyphs">Kartendaten ©2024</text><text x="2153" y="925" style="font-family:&quot;Liberation Sans&quot;,sans-serif;font-size:34px;" fill="#222" textLength="379" lengthAdjust="spacingAndGlyphs">Nutzungsbedingungen</text><defs><filter id="ds" x="-10%" y="-10%" width="120%" height="130%"><feDropShadow dx="0" dy="2" stdDeviation="4" flood-color="#000" flood-opacity=".3"/></filter></defs><rect x="62" y="54" width="698" height="146" rx="5" fill="#fff" filter="url(#ds)"/><rect x="387" y="54" width="2" height="146" fill="#e6e6e6"/><text x="146" y="148" style="font-family:&quot;Liberation Sans&quot;,sans-serif;font-size:63px;font-weight:bold;" fill="#000" textLength="160" lengthAdjust="spacingAndGlyphs">Karte</text><text x="474" y="148" style="font-family:&quot;Liberation Sans&quot;,sans-serif;font-size:63px;" fill="#565656" textLength="202" lengthAdjust="spacingAndGlyphs">Satellit</text><rect x="2372" y="54" width="148" height="146" rx="5" fill="#fff" filter="url(#ds)"/><path d="M2414 120v-24h24M2454 96h24v24M2478 136v24h-24M2438 160h-24v-24" fill="none" stroke="#666" stroke-width="8"/><rect x="2372" y="285" width="148" height="147" rx="5" fill="#fff" filter="url(#ds)"/><circle cx="2445" cy="323" r="17" fill="#f2b51e" stroke="#b8860b" stroke-width="2"/><path d="M2428 345h34l12 38-8 3-7-20v44h-11v-22h-6v22h-11v-44l-7 20-8-3z" fill="#f2b51e" stroke="#b8860b" stroke-width="2"/><path d="M2436 345l9 14 9-14z" fill="#e8710a"/><rect x="2372" y="549" width="148" height="299" rx="5" fill="#fff" filter="url(#ds)"/><rect x="2390" y="697" width="112" height="2.500" fill="#e6e6e6"/><path d="M2413 623h66M2446 590v66M2413 775h66" stroke="#666" stroke-width="10"/></g></svg>
<div style="left:1548.7px;top:336.8px;width:1093.5px;height:263.0px;background:#fff;border-radius:14px;box-shadow:0 2px 9px rgba(50,60,90,.15),0 0 1px rgba(50,60,90,.16);"></div>
<span class="t" style="left:1577.0px;top:358.5px;font-size:17.5px;line-height:23px;color:#212529;-webkit-text-stroke:.3px #212529;letter-spacing:0.26px;transform:scaleX(1.1200);">Kennzahlen</span>
<span class="t" style="left:1706.5px;top:358.7px;font-size:13.2px;line-height:17px;color:#3e6fe0;-webkit-text-stroke:.3px #3e6fe0;transform:scaleX(0.8432);">EUR</span>
<svg style="left:1736.5px;top:363.5px;" width="13.0" height="8.0" viewBox="0 0 16 10"><path d="M1.5 1.5L8 8l6.5-6.500" fill="none" stroke="#3f82f7" stroke-width="2.6" stroke-linecap="round" stroke-linejoin="round"/></svg>
<div style="left:1579.0px;top:403.0px;width:329.3px;height:174.8px;background:#eff1fc;border-radius:7px;"></div>
<div style="left:1601.0px;top:424.8px;width:44.5px;height:44.5px;background:#6366f1;border-radius:50%;"></div>
<svg style="left:1611.6px;top:435.3px;" width="24.2" height="21.9" viewBox="0 0 20.5 18.5"><ellipse cx="14" cy="8.6" rx="5.600" ry="2.300" fill="#fff" stroke="#6366f1" stroke-width=".9"/><ellipse cx="14" cy="5.9" rx="5.600" ry="2.300" fill="#fff" stroke="#6366f1" stroke-width=".9"/><ellipse cx="14" cy="3.2" rx="5.600" ry="2.300" fill="#fff" stroke="#6366f1" stroke-width=".9"/><ellipse cx="7.200" cy="14.8" rx="6.600" ry="2.800" fill="#fff" stroke="#6366f1" stroke-width="1"/><ellipse cx="7.200" cy="11.7" rx="6.600" ry="2.800" fill="#fff" stroke="#6366f1" stroke-width="1"/><ellipse cx="7.200" cy="8.6" rx="6.600" ry="2.800" fill="#fff" stroke="#6366f1" stroke-width="1"/></svg>
<span class="t" style="left:1607.8px;top:484.5px;font-size:26.5px;line-height:34px;color:#212529;font-weight:bold;letter-spacing:0.21px;transform:scaleX(1.1200);">540.50</span>
<span class="t" style="left:1607.4px;top:529.5px;font-size:17px;line-height:22px;color:#6366f1;-webkit-text-stroke:.3px #6366f1;transform:scaleX(1.0776);">Umsatz in EUR</span>
<div style="left:1931.3px;top:403.0px;width:329.3px;height:174.8px;background:#fdf4e1;border-radius:7px;"></div>
<div style="left:1953.3px;top:424.8px;width:44.5px;height:44.5px;background:#ffab00;border-radius:50%;"></div>
<svg style="left:1963.8px;top:439.5px;" width="24.0" height="16.0" viewBox="0 0 20 13.4"><path d="M1.600 0h16.800A1.600 1.600 0 0 1 20 1.600V5a1.700 1.700 0 0 0 0 3.400v3.400a1.600 1.600 0 0 1-1.600 1.600H1.600A1.600 1.600 0 0 1 0 11.800V8.400A1.700 1.700 0 0 0 0 5V1.600A1.600 1.600 0 0 1 1.600 0z" fill="#fff"/><rect x="3.400" y="3.200" width="13.200" height="7" fill="none" stroke="#ffab00" stroke-width="1"/></svg>
<span class="t" style="left:1960.1px;top:484.5px;font-size:26.5px;line-height:34px;color:#212529;font-weight:bold;transform:scaleX(0.8312);">12</span>
<span class="t" style="left:1959.7px;top:529.5px;font-size:17px;line-height:22px;color:#f59f00;-webkit-text-stroke:.3px #f59f00;letter-spacing:0.66px;transform:scaleX(1.1200);">Buchungen</span>
<div style="left:2282.2px;top:403.0px;width:329.3px;height:174.8px;background:#d9f5ea;border-radius:7px;"></div>
<div style="left:2304.2px;top:424.8px;width:44.5px;height:44.5px;background:#19bd88;border-radius:50%;"></div>
<svg style="left:2318.7px;top:435.5px;" width="16.0" height="22.0" viewBox="0 0 12 16"><path d="M1.200 0H7v4.200a.8.800 0 0 0 .8.800H12v9.800A1.200 1.200 0 0 1 10.800 16H1.200A1.200 1.200 0 0 1 0 14.800V1.200A1.200 1.200 0 0 1 1.200 0zM8 0l4 4H8z" fill="#fff"/><path d="M2 2.200h3.200v1H2zM2 4.200h3.200v1H2zM2.200 7.500h7.600v3.200H2.200zM3.200 8.500v1.200h5.600V8.500zM7 12.300h3v1H7z" fill="#19bd88" fill-rule="evenodd"/></svg>
<span class="t" style="left:2311.0px;top:484.5px;font-size:26.5px;line-height:34px;color:#212529;font-weight:bold;transform:scaleX(1.0517);">2</span>
<span class="t" style="left:2310.6px;top:529.5px;font-size:17px;line-height:22px;color:#13b07f;-webkit-text-stroke:.3px #13b07f;letter-spacing:0.47px;transform:scaleX(1.1200);">Offene Rechnungen</span>
<div style="left:1548.7px;top:622.0px;width:1093.5px;height:1195.5px;background:#fff;border-radius:14px;box-shadow:0 2px 9px rgba(50,60,90,.15),0 0 1px rgba(50,60,90,.16);overflow:hidden;"></div>
<span class="t" style="left:1577.0px;top:643.5px;font-size:17.5px;line-height:23px;color:#212529;-webkit-text-stroke:.3px #212529;letter-spacing:0.48px;transform:scaleX(1.1200);">Buchungen</span>
<div style="left:1577.0px;top:688.0px;width:1019.5px;height:1.3px;background:#e5e6ea;"></div>
<div style="left:2625.0px;top:622.0px;width:17.2px;height:1195.5px;background:#f4f4f4;border-radius:0 14px 14px 0;"></div>
<div style="left:2627.0px;top:639.2px;width:13.1px;height:652.5px;background:#cdcdcd;"></div>
<svg style="left:2629.5px;top:628.5px;" width="8.5" height="5.0" viewBox="0 0 10 6"><path d="M0 6l5-6 5 6z" fill="#b5b5b5"/></svg>
<svg style="left:2629.5px;top:1806.5px;" width="8.5" height="5.0" viewBox="0 0 10 6"><path d="M0 0l5 6 5-6z" fill="#8a8a8a"/></svg>
<div style="left:1579.0px;top:744.0px;width:1015.3px;height:108.1px;background:#fff;border-radius:12px;box-shadow:0 2px 6px rgba(30,30,40,.15),0 0 2px rgba(30,30,40,.10);"></div>
<div style="left:1579.0px;top:744.0px;width:6.2px;height:108.1px;background:#f7a600;border-radius:6px 0 0 6px;"></div>
<div style="left:1601.0px;top:719.4px;width:150.7px;height:30.9px;background:#d5f3e7;border-radius:15.500px;box-shadow:0 2px 5px rgba(50,60,90,.18);"></div>
<svg style="left:1614.8px;top:727.2px;" width="12.2" height="12.2" viewBox="0 0 16 16"><circle cx="8" cy="8" r="8" fill="#139c6b"/><path d="M4.300 8.300l2.500 2.500 5-5" fill="none" stroke="#fff" stroke-width="2" stroke-linecap="round" stroke-linejoin="round"/></svg>
<span class="t" style="left:1633.5px;top:722.9px;font-size:16px;line-height:21px;color:#139c6b;-webkit-text-stroke:.3px #139c6b;letter-spacing:0.30px;transform:scaleX(1.1200);">Freigegeben</span>
<span class="t" style="left:1602.0px;top:756.2px;font-size:16px;line-height:21px;color:#212529;-webkit-text-stroke:.3px #212529;letter-spacing:0.38px;transform:scaleX(1.1200);">Fortgeschrittenenkurs</span>
<span class="t" style="left:1795.6px;top:756.2px;font-size:16px;line-height:21px;color:#a1a5b7;transform:scaleX(1.0385);">IT3_Z</span>
<span class="t" style="left:2501.3px;top:756.5px;font-size:13.2px;line-height:17px;color:#3e6fe0;-webkit-text-stroke:.3px #3e6fe0;letter-spacing:0.02px;transform:scaleX(1.1200);">Aktionen</span>
<svg style="left:2565.0px;top:761.5px;" width="13.0" height="8.0" viewBox="0 0 16 10"><path d="M1.5 1.5L8 8l6.5-6.500" fill="none" stroke="#3f82f7" stroke-width="2.6" stroke-linecap="round" stroke-linejoin="round"/></svg>
<span class="t" style="left:1602.0px;top:792.4px;font-size:16px;line-height:21px;color:#a1a5b7;letter-spacing:0.18px;transform:scaleX(1.1200);">Status</span>
<span class="t" style="left:1700.0px;top:792.4px;font-size:16px;line-height:21px;color:#a1a5b7;letter-spacing:0.57px;transform:scaleX(1.1200);">Nummer</span>
<span class="t" style="left:1806.0px;top:792.4px;font-size:16px;line-height:21px;color:#a1a5b7;letter-spacing:0.57px;transform:scaleX(1.1200);">Gebucht am</span>
<span class="t" style="left:1955.2px;top:792.4px;font-size:16px;line-height:21px;color:#a1a5b7;letter-spacing:0.47px;transform:scaleX(1.1200);">Total</span>
<svg style="left:1602.0px;top:819.3px;" width="17.6" height="17.6" viewBox="0 0 16 16"><circle cx="8" cy="8" r="8" fill="#17a673"/><path d="M4.300 8.300l2.500 2.500 5-5" fill="none" stroke="#fff" stroke-width="2" stroke-linecap="round" stroke-linejoin="round"/></svg>
<span class="t" style="left:1628.3px;top:817.6px;font-size:16px;line-height:21px;color:#212529;transform:scaleX(1.1104);">Aktiv</span>
<span class="t" style="left:1700.0px;top:817.6px;font-size:16px;line-height:21px;color:#212529;transform:scaleX(1.1200);">220452</span>
<span class="t" style="left:1806.0px;top:817.6px;font-size:16px;line-height:21px;color:#212529;transform:scaleX(0.9402);">01.03.2024 11:12</span>
<span class="t" style="left:1955.2px;top:817.6px;font-size:16px;line-height:21px;color:#212529;transform:scaleX(1.0508);">CHF 55.00</span>
<div style="left:1579.0px;top:895.8px;width:1015.3px;height:108.1px;background:#fff;border-radius:12px;box-shadow:0 2px 6px rgba(30,30,40,.15),0 0 2px rgba(30,30,40,.10);"></div>
<div style="left:1579.0px;top:895.8px;width:6.2px;height:108.1px;background:#f7a600;border-radius:6px 0 0 6px;"></div>
<div style="left:1601.0px;top:871.2px;width:261.6px;height:30.9px;background:#e4e3fb;border-radius:15.500px;box-shadow:0 2px 5px rgba(50,60,90,.18);"></div>
<svg style="left:1614.8px;top:880.5px;" width="13.0" height="9.5" viewBox="0 0 16 12"><path d="M1.800 6.300l4 4 8.400-8.500" fill="none" stroke="#4b0f9e" stroke-width="2.8" stroke-linecap="round" stroke-linejoin="round"/></svg>
<span class="t" style="left:1633.5px;top:874.7px;font-size:16px;line-height:21px;color:#5b55e0;-webkit-text-stroke:.3px #5b55e0;letter-spacing:0.46px;transform:scaleX(1.1200);">Garantierte Durchführung</span>
<span class="t" style="left:1602.0px;top:908.0px;font-size:16px;line-height:21px;color:#212529;-webkit-text-stroke:.3px #212529;letter-spacing:0.43px;transform:scaleX(1.1200);">Aufbaukurs</span>
<span class="t" style="left:1708.8px;top:908.0px;font-size:16px;line-height:21px;color:#a1a5b7;transform:scaleX(1.0511);">FR2_W</span>
<span class="t" style="left:2501.3px;top:908.3px;font-size:13.2px;line-height:17px;color:#3e6fe0;-webkit-text-stroke:.3px #3e6fe0;letter-spacing:0.02px;transform:scaleX(1.1200);">Aktionen</span>
<svg style="left:2565.0px;top:913.3px;" width="13.0" height="8.0" viewBox="0 0 16 10"><path d="M1.5 1.5L8 8l6.5-6.500" fill="none" stroke="#3f82f7" stroke-width="2.6" stroke-linecap="round" stroke-linejoin="round"/></svg>
<span class="t" style="left:1602.0px;top:944.2px;font-size:16px;line-height:21px;color:#a1a5b7;letter-spacing:0.18px;transform:scaleX(1.1200);">Status</span>
<span class="t" style="left:1700.0px;top:944.2px;font-size:16px;line-height:21px;color:#a1a5b7;letter-spacing:0.57px;transform:scaleX(1.1200);">Nummer</span>
<span class="t" style="left:1806.0px;top:944.2px;font-size:16px;line-height:21px;color:#a1a5b7;letter-spacing:0.57px;transform:scaleX(1.1200);">Gebucht am</span>
<span class="t" style="left:1961.7px;top:944.2px;font-size:16px;line-height:21px;color:#a1a5b7;letter-spacing:0.47px;transform:scaleX(1.1200);">Total</span>
<svg style="left:1602.0px;top:971.1px;" width="17.6" height="17.6" viewBox="0 0 16 16"><circle cx="8" cy="8" r="8" fill="#17a673"/><path d="M4.300 8.300l2.500 2.500 5-5" fill="none" stroke="#fff" stroke-width="2" stroke-linecap="round" stroke-linejoin="round"/></svg>
<span class="t" style="left:1628.3px;top:969.4px;font-size:16px;line-height:21px;color:#212529;transform:scaleX(1.1104);">Aktiv</span>
<span class="t" style="left:1700.0px;top:969.4px;font-size:16px;line-height:21px;color:#212529;transform:scaleX(1.1200);">220426</span>
<span class="t" style="left:1806.0px;top:969.4px;font-size:16px;line-height:21px;color:#212529;transform:scaleX(0.9848);">01.03.2024 11:06</span>
<span class="t" style="left:1961.7px;top:969.4px;font-size:16px;line-height:21px;color:#212529;transform:scaleX(0.9838);">EUR 75.00</span>
<div style="left:1579.0px;top:1047.6px;width:1015.3px;height:108.1px;background:#fff;border-radius:12px;box-shadow:0 2px 6px rgba(30,30,40,.15),0 0 2px rgba(30,30,40,.10);"></div>
<div style="left:1579.0px;top:1047.6px;width:6.2px;height:108.1px;background:#f7a600;border-radius:6px 0 0 6px;"></div>
<div style="left:1601.0px;top:1023.0px;width:150.7px;height:30.9px;background:#d5f3e7;border-radius:15.500px;box-shadow:0 2px 5px rgba(50,60,90,.18);"></div>
<svg style="left:1614.8px;top:1030.8px;" width="12.2" height="12.2" viewBox="0 0 16 16"><circle cx="8" cy="8" r="8" fill="#139c6b"/><path d="M4.300 8.300l2.500 2.500 5-5" fill="none" stroke="#fff" stroke-width="2" stroke-linecap="round" stroke-linejoin="round"/></svg>
<span class="t" style="left:1633.5px;top:1026.5px;font-size:16px;line-height:21px;color:#139c6b;-webkit-text-stroke:.3px #139c6b;letter-spacing:0.30px;transform:scaleX(1.1200);">Freigegeben</span>
<span class="t" style="left:1602.0px;top:1059.8px;font-size:16px;line-height:21px;color:#212529;-webkit-text-stroke:.3px #212529;letter-spacing:0.43px;transform:scaleX(1.1200);">Aufbaukurs</span>
<span class="t" style="left:1708.8px;top:1059.8px;font-size:16px;line-height:21px;color:#a1a5b7;transform:scaleX(1.0511);">FR2_W</span>
<span class="t" style="left:2501.3px;top:1060.1px;font-size:13.2px;line-height:17px;color:#3e6fe0;-webkit-text-stroke:.3px #3e6fe0;letter-spacing:0.02px;transform:scaleX(1.1200);">Aktionen</span>
<svg style="left:2565.0px;top:1065.1px;" width="13.0" height="8.0" viewBox="0 0 16 10"><path d="M1.5 1.5L8 8l6.5-6.500" fill="none" stroke="#3f82f7" stroke-width="2.6" stroke-linecap="round" stroke-linejoin="round"/></svg>
<span class="t" style="left:1602.0px;top:1096.0px;font-size:16px;line-height:21px;color:#a1a5b7;letter-spacing:0.18px;transform:scaleX(1.1200);">Status</span>
<span class="t" style="left:1700.0px;top:1096.0px;font-size:16px;line-height:21px;color:#a1a5b7;letter-spacing:0.57px;transform:scaleX(1.1200);">Nummer</span>
<span class="t" style="left:1806.0px;top:1096.0px;font-size:16px;line-height:21px;color:#a1a5b7;letter-spacing:0.57px;transform:scaleX(1.1200);">Gebucht am</span>
<span class="t" style="left:1960.4px;top:1096.0px;font-size:16px;line-height:21px;color:#a1a5b7;letter-spacing:0.47px;transform:scaleX(1.1200);">Total</span>
<svg style="left:1602.0px;top:1122.9px;" width="17.6" height="17.6" viewBox="0 0 16 16"><circle cx="8" cy="8" r="8" fill="#17a673"/><path d="M4.300 8.300l2.500 2.500 5-5" fill="none" stroke="#fff" stroke-width="2" stroke-linecap="round" stroke-linejoin="round"/></svg>
<span class="t" style="left:1628.3px;top:1121.2px;font-size:16px;line-height:21px;color:#212529;transform:scaleX(1.1104);">Aktiv</span>
<span class="t" style="left:1700.0px;top:1121.2px;font-size:16px;line-height:21px;color:#212529;transform:scaleX(1.1200);">220410</span>
<span class="t" style="left:1806.0px;top:1121.2px;font-size:16px;line-height:21px;color:#212529;transform:scaleX(0.9767);">01.03.2024 11:02</span>
<span class="t" style="left:1960.4px;top:1121.2px;font-size:16px;line-height:21px;color:#212529;transform:scaleX(0.9838);">EUR 75.00</span>
<div style="left:1579.0px;top:1199.4px;width:1015.3px;height:108.1px;background:#fff;border-radius:12px;box-shadow:0 2px 6px rgba(30,30,40,.15),0 0 2px rgba(30,30,40,.10);"></div>
<div style="left:1579.0px;top:1199.4px;width:6.2px;height:108.1px;background:#f7a600;border-radius:6px 0 0 6px;"></div>
<div style="left:1601.0px;top:1174.8px;width:159.9px;height:30.9px;background:#e2f7fa;border-radius:15.500px;box-shadow:0 2px 5px rgba(50,60,90,.18);"></div>
<svg style="left:1614.8px;top:1184.1px;" width="15.0" height="9.5" viewBox="0 0 18 12"><path d="M9 0c4.500 0 7.800 3.500 9 6-1.200 2.500-4.500 6-9 6S1.200 8.500 0 6c1.200-2.500 4.500-6 9-6zM9 2.200a3.800 3.800 0 1 0 0 7.600 3.800 3.800 0 0 0 0-7.600z" fill="#19b2cc" fill-rule="evenodd"/><circle cx="9" cy="6" r="2.100" fill="#19b2cc"/></svg>
<span class="t" style="left:1635.5px;top:1178.3px;font-size:16px;line-height:21px;color:#19b2cc;-webkit-text-stroke:.3px #19b2cc;letter-spacing:0.56px;transform:scaleX(1.1200);">Veröffentlicht</span>
<span class="t" style="left:1602.0px;top:1211.6px;font-size:16px;line-height:21px;color:#212529;-webkit-text-stroke:.3px #212529;letter-spacing:0.28px;transform:scaleX(1.1200);">Grundkurs</span>
<span class="t" style="left:1699.8px;top:1211.6px;font-size:16px;line-height:21px;color:#a1a5b7;transform:scaleX(0.9325);">E1_B</span>
<span class="t" style="left:2501.3px;top:1211.9px;font-size:13.2px;line-height:17px;color:#3e6fe0;-webkit-text-stroke:.3px #3e6fe0;letter-spacing:0.02px;transform:scaleX(1.1200);">Aktionen</span>
<svg style="left:2565.0px;top:1216.9px;" width="13.0" height="8.0" viewBox="0 0 16 10"><path d="M1.5 1.5L8 8l6.5-6.500" fill="none" stroke="#3f82f7" stroke-width="2.6" stroke-linecap="round" stroke-linejoin="round"/></svg>
<span class="t" style="left:1602.0px;top:1247.8px;font-size:16px;line-height:21px;color:#a1a5b7;letter-spacing:0.18px;transform:scaleX(1.1200);">Status</span>
<span class="t" style="left:1700.0px;top:1247.8px;font-size:16px;line-height:21px;color:#a1a5b7;letter-spacing:0.57px;transform:scaleX(1.1200);">Nummer</span>
<span class="t" style="left:1806.0px;top:1247.8px;font-size:16px;line-height:21px;color:#a1a5b7;letter-spacing:0.57px;transform:scaleX(1.1200);">Gebucht am</span>
<span class="t" style="left:1966.5px;top:1247.8px;font-size:16px;line-height:21px;color:#a1a5b7;letter-spacing:0.47px;transform:scaleX(1.1200);">Total</span>
<svg style="left:1602.0px;top:1274.7px;" width="17.6" height="17.6" viewBox="0 0 16 16"><circle cx="8" cy="8" r="8" fill="#17a673"/><path d="M4.300 8.300l2.500 2.500 5-5" fill="none" stroke="#fff" stroke-width="2" stroke-linecap="round" stroke-linejoin="round"/></svg>
<span class="t" style="left:1628.3px;top:1273.0px;font-size:16px;line-height:21px;color:#212529;transform:scaleX(1.1104);">Aktiv</span>
<span class="t" style="left:1700.0px;top:1273.0px;font-size:16px;line-height:21px;color:#212529;transform:scaleX(1.1200);">220381</span>
<span class="t" style="left:1806.0px;top:1273.0px;font-size:16px;line-height:21px;color:#212529;transform:scaleX(1.0195);">01.03.2024 09:18</span>
<span class="t" style="left:1966.5px;top:1273.0px;font-size:16px;line-height:21px;color:#212529;transform:scaleX(1.0055);">EUR 65.00</span>
<div style="left:1579.0px;top:1351.2px;width:1015.3px;height:108.1px;background:#fff;border-radius:12px;box-shadow:0 2px 6px rgba(30,30,40,.15),0 0 2px rgba(30,30,40,.10);"></div>
<div style="left:1579.0px;top:1351.2px;width:6.2px;height:108.1px;background:#f7a600;border-radius:6px 0 0 6px;"></div>
<div style="left:1601.0px;top:1326.6px;width:150.7px;height:30.9px;background:#d5f3e7;border-radius:15.500px;box-shadow:0 2px 5px rgba(50,60,90,.18);"></div>
<svg style="left:1614.8px;top:1334.4px;" width="12.2" height="12.2" viewBox="0 0 16 16"><circle cx="8" cy="8" r="8" fill="#139c6b"/><path d="M4.300 8.300l2.500 2.500 5-5" fill="none" stroke="#fff" stroke-width="2" stroke-linecap="round" stroke-linejoin="round"/></svg>
<span class="t" style="left:1633.5px;top:1330.1px;font-size:16px;line-height:21px;color:#139c6b;-webkit-text-stroke:.3px #139c6b;letter-spacing:0.30px;transform:scaleX(1.1200);">Freigegeben</span>
<span class="t" style="left:1602.0px;top:1363.4px;font-size:16px;line-height:21px;color:#212529;-webkit-text-stroke:.3px #212529;letter-spacing:0.45px;transform:scaleX(1.1200);">Grundlagenkurs</span>
<span class="t" style="left:1747.8px;top:1363.4px;font-size:16px;line-height:21px;color:#a1a5b7;transform:scaleX(0.9681);">FR1_W</span>
<span class="t" style="left:2501.3px;top:1363.7px;font-size:13.2px;line-height:17px;color:#3e6fe0;-webkit-text-stroke:.3px #3e6fe0;letter-spacing:0.02px;transform:scaleX(1.1200);">Aktionen</span>
<svg style="left:2565.0px;top:1368.7px;" width="13.0" height="8.0" viewBox="0 0 16 10"><path d="M1.5 1.5L8 8l6.5-6.500" fill="none" stroke="#3f82f7" stroke-width="2.6" stroke-linecap="round" stroke-linejoin="round"/></svg>
<span class="t" style="left:1602.0px;top:1399.6px;font-size:16px;line-height:21px;color:#a1a5b7;letter-spacing:0.18px;transform:scaleX(1.1200);">Status</span>
<span class="t" style="left:1700.0px;top:1399.6px;font-size:16px;line-height:21px;color:#a1a5b7;letter-spacing:0.57px;transform:scaleX(1.1200);">Nummer</span>
<span class="t" style="left:1806.0px;top:1399.6px;font-size:16px;line-height:21px;color:#a1a5b7;letter-spacing:0.57px;transform:scaleX(1.1200);">Gebucht am</span>
<span class="t" style="left:1964.0px;top:1399.6px;font-size:16px;line-height:21px;color:#a1a5b7;letter-spacing:0.47px;transform:scaleX(1.1200);">Total</span>
<svg style="left:1602.0px;top:1426.5px;" width="17.6" height="17.6" viewBox="0 0 16 16"><circle cx="8" cy="8" r="8" fill="#17a673"/><path d="M4.300 8.300l2.500 2.500 5-5" fill="none" stroke="#fff" stroke-width="2" stroke-linecap="round" stroke-linejoin="round"/></svg>
<span class="t" style="left:1628.3px;top:1424.8px;font-size:16px;line-height:21px;color:#212529;transform:scaleX(1.1104);">Aktiv</span>
<span class="t" style="left:1700.0px;top:1424.8px;font-size:16px;line-height:21px;color:#212529;transform:scaleX(1.1200);">220291</span>
<span class="t" style="left:1806.0px;top:1424.8px;font-size:16px;line-height:21px;color:#212529;transform:scaleX(0.9955);">25.07.2023 13:16</span>
<span class="t" style="left:1964.0px;top:1424.8px;font-size:16px;line-height:21px;color:#212529;transform:scaleX(0.9774);">EUR 0.00</span>
<div style="left:1579.0px;top:1503.0px;width:1015.3px;height:108.1px;background:#fff;border-radius:12px;box-shadow:0 2px 6px rgba(30,30,40,.15),0 0 2px rgba(30,30,40,.10);"></div>
<div style="left:1579.0px;top:1503.0px;width:6.2px;height:108.1px;background:#f7a600;border-radius:6px 0 0 6px;"></div>
<div style="left:1601.0px;top:1478.4px;width:155.0px;height:30.9px;background:#fdeed6;border-radius:15.500px;box-shadow:0 2px 5px rgba(50,60,90,.18);"></div>
<svg style="left:1614.8px;top:1486.7px;" width="16.5" height="11.5" viewBox="0 0 20 14"><path d="M10 1.500c4.300 0 7.400 3.200 8.500 5.500-1.100 2.300-4.200 5.500-8.500 5.500S2.600 9.300 1.500 7C2.600 4.700 5.700 1.500 10 1.500zM10 3.600a3.400 3.400 0 1 0 0 6.800 3.400 3.400 0 0 0 0-6.800z" fill="#f08c00" fill-rule="evenodd"/><path d="M1.500.8L18.500 13.200" stroke="#f08c00" stroke-width="1.800" stroke-linecap="round"/></svg>
<span class="t" style="left:1636.0px;top:1481.9px;font-size:16px;line-height:21px;color:#f08c00;-webkit-text-stroke:.3px #f08c00;letter-spacing:0.24px;transform:scaleX(1.1200);">Geschlossen</span>
<span class="t" style="left:1602.0px;top:1515.2px;font-size:16px;line-height:21px;color:#212529;-webkit-text-stroke:.3px #212529;letter-spacing:0.38px;transform:scaleX(1.1200);">Fortgeschrittenenkurs</span>
<span class="t" style="left:1795.6px;top:1515.2px;font-size:16px;line-height:21px;color:#a1a5b7;transform:scaleX(1.0672);">E3_W</span>
<span class="t" style="left:2501.3px;top:1515.5px;font-size:13.2px;line-height:17px;color:#3e6fe0;-webkit-text-stroke:.3px #3e6fe0;letter-spacing:0.02px;transform:scaleX(1.1200);">Aktionen</span>
<svg style="left:2565.0px;top:1520.5px;" width="13.0" height="8.0" viewBox="0 0 16 10"><path d="M1.5 1.5L8 8l6.5-6.500" fill="none" stroke="#3f82f7" stroke-width="2.6" stroke-linecap="round" stroke-linejoin="round"/></svg>
<span class="t" style="left:1602.0px;top:1551.4px;font-size:16px;line-height:21px;color:#a1a5b7;letter-spacing:0.18px;transform:scaleX(1.1200);">Status</span>
<span class="t" style="left:1700.0px;top:1551.4px;font-size:16px;line-height:21px;color:#a1a5b7;letter-spacing:0.57px;transform:scaleX(1.1200);">Nummer</span>
<span class="t" style="left:1806.0px;top:1551.4px;font-size:16px;line-height:21px;color:#a1a5b7;letter-spacing:0.57px;transform:scaleX(1.1200);">Gebucht am</span>
<span class="t" style="left:1968.3px;top:1551.4px;font-size:16px;line-height:21px;color:#a1a5b7;letter-spacing:0.47px;transform:scaleX(1.1200);">Total</span>
<svg style="left:1602.0px;top:1578.3px;" width="17.6" height="17.6" viewBox="0 0 16 16"><circle cx="8" cy="8" r="8" fill="#17a673"/><path d="M4.300 8.300l2.500 2.500 5-5" fill="none" stroke="#fff" stroke-width="2" stroke-linecap="round" stroke-linejoin="round"/></svg>
<span class="t" style="left:1628.3px;top:1576.6px;font-size:16px;line-height:21px;color:#212529;transform:scaleX(1.1104);">Aktiv</span>
<span class="t" style="left:1700.0px;top:1576.6px;font-size:16px;line-height:21px;color:#212529;transform:scaleX(1.1200);">220286</span>
<span class="t" style="left:1806.0px;top:1576.6px;font-size:16px;line-height:21px;color:#212529;transform:scaleX(1.0316);">17.07.2023 09:03</span>
<span class="t" style="left:1968.3px;top:1576.6px;font-size:16px;line-height:21px;color:#212529;">EUR 55.00</span>
<div style="left:1579.0px;top:1654.8px;width:1015.3px;height:108.1px;background:#fff;border-radius:12px;box-shadow:0 2px 6px rgba(30,30,40,.15),0 0 2px rgba(30,30,40,.10);"></div>
<div style="left:1579.0px;top:1654.8px;width:6.2px;height:108.1px;background:#f7a600;border-radius:6px 0 0 6px;"></div>
<div style="left:1601.0px;top:1630.2px;width:155.0px;height:30.9px;background:#fdeed6;border-radius:15.500px;box-shadow:0 2px 5px rgba(50,60,90,.18);"></div>
<svg style="left:1614.8px;top:1638.5px;" width="16.5" height="11.5" viewBox="0 0 20 14"><path d="M10 1.500c4.300 0 7.400 3.200 8.500 5.500-1.100 2.300-4.200 5.500-8.500 5.500S2.600 9.300 1.500 7C2.600 4.700 5.700 1.500 10 1.500zM10 3.600a3.400 3.400 0 1 0 0 6.800 3.400 3.400 0 0 0 0-6.800z" fill="#f08c00" fill-rule="evenodd"/><path d="M1.500.8L18.500 13.200" stroke="#f08c00" stroke-width="1.800" stroke-linecap="round"/></svg>
<span class="t" style="left:1636.0px;top:1633.7px;font-size:16px;line-height:21px;color:#f08c00;-webkit-text-stroke:.3px #f08c00;letter-spacing:0.24px;transform:scaleX(1.1200);">Geschlossen</span>
<span class="t" style="left:1602.0px;top:1667.0px;font-size:16px;line-height:21px;color:#212529;-webkit-text-stroke:.3px #212529;letter-spacing:0.45px;transform:scaleX(1.1200);">Grundlagenkurs</span>
<span class="t" style="left:1747.8px;top:1667.0px;font-size:16px;line-height:21px;color:#a1a5b7;">IT1_W</span>
<span class="t" style="left:2501.3px;top:1667.3px;font-size:13.2px;line-height:17px;color:#3e6fe0;-webkit-text-stroke:.3px #3e6fe0;letter-spacing:0.02px;transform:scaleX(1.1200);">Aktionen</span>
<svg style="left:2565.0px;top:1672.3px;" width="13.0" height="8.0" viewBox="0 0 16 10"><path d="M1.5 1.5L8 8l6.5-6.500" fill="none" stroke="#3f82f7" stroke-width="2.6" stroke-linecap="round" stroke-linejoin="round"/></svg>
<span class="t" style="left:1602.0px;top:1703.2px;font-size:16px;line-height:21px;color:#a1a5b7;letter-spacing:0.18px;transform:scaleX(1.1200);">Status</span>
<span class="t" style="left:1700.0px;top:1703.2px;font-size:16px;line-height:21px;color:#a1a5b7;letter-spacing:0.57px;transform:scaleX(1.1200);">Nummer</span>
<span class="t" style="left:1806.0px;top:1703.2px;font-size:16px;line-height:21px;color:#a1a5b7;letter-spacing:0.57px;transform:scaleX(1.1200);">Gebucht am</span>
<span class="t" style="left:1966.0px;top:1703.2px;font-size:16px;line-height:21px;color:#a1a5b7;letter-spacing:0.47px;transform:scaleX(1.1200);">Total</span>
<svg style="left:1602.0px;top:1730.1px;" width="17.6" height="17.6" viewBox="0 0 16 16"><circle cx="8" cy="8" r="8" fill="#17a673"/><path d="M4.300 8.300l2.500 2.500 5-5" fill="none" stroke="#fff" stroke-width="2" stroke-linecap="round" stroke-linejoin="round"/></svg>
<span class="t" style="left:1628.3px;top:1728.4px;font-size:16px;line-height:21px;color:#212529;transform:scaleX(1.1104);">Aktiv</span>
<span class="t" style="left:1700.0px;top:1728.4px;font-size:16px;line-height:21px;color:#212529;transform:scaleX(1.1200);">220267</span>
<span class="t" style="left:1806.0px;top:1728.4px;font-size:16px;line-height:21px;color:#212529;transform:scaleX(1.0115);">01.05.2023 16:36</span>
<span class="t" style="left:1966.0px;top:1728.4px;font-size:16px;line-height:21px;color:#212529;">EUR 85.50</span>
<div style="left:1579.0px;top:1806.6px;width:1015.3px;height:10.9px;background:#fff;border-radius:12px;box-shadow:0 2px 6px rgba(30,30,40,.15),0 0 2px rgba(30,30,40,.10);border-radius:12px 12px 0 0;"></div>
<div style="left:1579.0px;top:1806.6px;width:6.2px;height:10.9px;background:#f7a600;border-radius:6px 0 0 0;"></div>
<div style="left:1601.0px;top:1782.0px;width:155.0px;height:30.9px;background:#fdeed6;border-radius:15.500px;box-shadow:0 2px 5px rgba(50,60,90,.18);"></div>
<svg style="left:1614.8px;top:1790.3px;" width="16.5" height="11.5" viewBox="0 0 20 14"><path d="M10 1.500c4.300 0 7.400 3.200 8.500 5.500-1.100 2.300-4.200 5.500-8.500 5.500S2.600 9.300 1.500 7C2.600 4.700 5.700 1.500 10 1.500zM10 3.600a3.400 3.400 0 1 0 0 6.800 3.400 3.400 0 0 0 0-6.800z" fill="#f08c00" fill-rule="evenodd"/><path d="M1.500.8L18.500 13.200" stroke="#f08c00" stroke-width="1.800" stroke-linecap="round"/></svg>
<span class="t" style="left:1636.0px;top:1785.5px;font-size:16px;line-height:21px;color:#f08c00;-webkit-text-stroke:.3px #f08c00;letter-spacing:0.24px;transform:scaleX(1.1200);">Geschlossen</span>
<div style="left:2664.0px;top:336.8px;width:1115.3px;height:745.2px;background:#fff;border-radius:14px;box-shadow:0 2px 9px rgba(50,60,90,.15),0 0 1px rgba(50,60,90,.16);"></div>
<span class="t" style="left:2692.0px;top:358.5px;font-size:17.5px;line-height:23px;color:#212529;-webkit-text-stroke:.3px #212529;letter-spacing:0.34px;transform:scaleX(1.1200);">Rechnungen</span>
<div style="left:2692.0px;top:403.0px;width:1042.0px;height:1.3px;background:#e5e6ea;"></div>
<div style="left:3762.0px;top:336.8px;width:17.3px;height:745.2px;background:#f6f6f6;border-radius:0 14px 14px 0;"></div>
<div style="left:3764.0px;top:354.0px;width:13.2px;height:668.7px;background:#cdcdcd;"></div>
<svg style="left:3766.3px;top:343.5px;" width="8.5" height="5.0" viewBox="0 0 10 6"><path d="M0 6l5-6 5 6z" fill="#c4c4c4"/></svg>
<svg style="left:3766.3px;top:1070.0px;" width="8.5" height="5.0" viewBox="0 0 10 6"><path d="M0 0l5 6 5-6z" fill="#c4c4c4"/></svg>
<div style="left:2694.2px;top:470.0px;width:1036.8px;height:107.2px;background:#fff;border-radius:12px;box-shadow:0 2px 6px rgba(30,30,40,.15),0 0 2px rgba(30,30,40,.10);"></div>
<div style="left:2694.2px;top:470.0px;width:5.8px;height:107.2px;background:#6366f1;border-radius:6px 0 0 6px;"></div>
<span class="t" style="left:2717.0px;top:482.2px;font-size:16px;line-height:21px;color:#212529;-webkit-text-stroke:.3px #212529;transform:scaleX(1.0097);">SPS85</span>
<span class="t" style="left:2779.3px;top:482.2px;font-size:16px;line-height:21px;color:#a1a5b7;transform:scaleX(1.0731);">220291 Grundlagenkurs FR1_W</span>
<span class="t" style="left:2717.0px;top:518.2px;font-size:16px;line-height:21px;color:#a1a5b7;letter-spacing:0.18px;transform:scaleX(1.1200);">Status</span>
<span class="t" style="left:2820.5px;top:518.2px;font-size:16px;line-height:21px;color:#a1a5b7;letter-spacing:0.12px;transform:scaleX(1.1200);">Erfasst am</span>
<span class="t" style="left:2985.9px;top:518.2px;font-size:16px;line-height:21px;color:#a1a5b7;letter-spacing:0.28px;transform:scaleX(1.1200);">Fällig am</span>
<span class="t" style="left:3151.2px;top:518.2px;font-size:16px;line-height:21px;color:#a1a5b7;letter-spacing:0.47px;transform:scaleX(1.1200);">Total</span>
<svg style="left:2717.6px;top:546.2px;" width="16.4" height="16.4" viewBox="0 0 16 16"><circle cx="8" cy="8" r="8" fill="#212529"/><path d="M8 3.800v5" stroke="#fff" stroke-width="2.200" stroke-linecap="round"/><circle cx="8" cy="11.800" r="1.300" fill="#fff"/></svg>
<span class="t" style="left:2743.2px;top:543.2px;font-size:16px;line-height:21px;color:#212529;letter-spacing:0.09px;transform:scaleX(1.1200);">Offen</span>
<span class="t" style="left:2820.5px;top:543.2px;font-size:16px;line-height:21px;color:#212529;transform:scaleX(1.0589);">20.06.2024 10:08</span>
<span class="t" style="left:2985.9px;top:543.2px;font-size:16px;line-height:21px;color:#212529;transform:scaleX(1.0589);">20.06.2024 10:08</span>
<span class="t" style="left:3151.2px;top:543.2px;font-size:16px;line-height:21px;color:#212529;transform:scaleX(0.9902);">EUR 75.00</span>
<div style="left:2694.2px;top:589.0px;width:1036.8px;height:107.2px;background:#fff;border-radius:12px;box-shadow:0 2px 6px rgba(30,30,40,.15),0 0 2px rgba(30,30,40,.10);"></div>
<div style="left:2694.2px;top:589.0px;width:5.8px;height:107.2px;background:#6366f1;border-radius:6px 0 0 6px;"></div>
<span class="t" style="left:2717.0px;top:601.2px;font-size:16px;line-height:21px;color:#212529;-webkit-text-stroke:.3px #212529;transform:scaleX(1.0097);">SPS83</span>
<span class="t" style="left:2779.3px;top:601.2px;font-size:16px;line-height:21px;color:#a1a5b7;transform:scaleX(0.9736);">SPS83</span>
<span class="t" style="left:2717.0px;top:637.2px;font-size:16px;line-height:21px;color:#a1a5b7;letter-spacing:0.18px;transform:scaleX(1.1200);">Status</span>
<span class="t" style="left:2820.5px;top:637.2px;font-size:16px;line-height:21px;color:#a1a5b7;letter-spacing:0.12px;transform:scaleX(1.1200);">Erfasst am</span>
<span class="t" style="left:2976.8px;top:637.2px;font-size:16px;line-height:21px;color:#a1a5b7;letter-spacing:0.28px;transform:scaleX(1.1200);">Fällig am</span>
<span class="t" style="left:3132.7px;top:637.2px;font-size:16px;line-height:21px;color:#a1a5b7;letter-spacing:0.47px;transform:scaleX(1.1200);">Total</span>
<svg style="left:2717.6px;top:665.2px;" width="16.4" height="16.4" viewBox="0 0 16 16"><circle cx="8" cy="8" r="8" fill="#212529"/><path d="M8 3.800v5" stroke="#fff" stroke-width="2.200" stroke-linecap="round"/><circle cx="8" cy="11.800" r="1.300" fill="#fff"/></svg>
<span class="t" style="left:2743.2px;top:662.2px;font-size:16px;line-height:21px;color:#212529;letter-spacing:0.09px;transform:scaleX(1.1200);">Offen</span>
<span class="t" style="left:2820.5px;top:662.2px;font-size:16px;line-height:21px;color:#212529;transform:scaleX(0.9834);">14.05.2024 16:18</span>
<span class="t" style="left:2976.8px;top:662.2px;font-size:16px;line-height:21px;color:#212529;transform:scaleX(0.9834);">14.05.2024 16:18</span>
<span class="t" style="left:3132.7px;top:662.2px;font-size:16px;line-height:21px;color:#212529;transform:scaleX(1.0094);">EUR 55.00</span>
<div style="left:2694.2px;top:707.3px;width:1036.8px;height:107.2px;background:#fff;border-radius:12px;box-shadow:0 2px 6px rgba(30,30,40,.15),0 0 2px rgba(30,30,40,.10);"></div>
<div style="left:2694.2px;top:707.3px;width:5.8px;height:107.2px;background:#6366f1;border-radius:6px 0 0 6px;"></div>
<span class="t" style="left:2717.0px;top:719.5px;font-size:16px;line-height:21px;color:#212529;-webkit-text-stroke:.3px #212529;transform:scaleX(1.0097);">SPS82</span>
<span class="t" style="left:2779.3px;top:719.5px;font-size:16px;line-height:21px;color:#a1a5b7;transform:scaleX(0.9736);">SPS82</span>
<span class="t" style="left:2717.0px;top:755.5px;font-size:16px;line-height:21px;color:#a1a5b7;letter-spacing:0.18px;transform:scaleX(1.1200);">Status</span>
<span class="t" style="left:2836.0px;top:755.5px;font-size:16px;line-height:21px;color:#a1a5b7;letter-spacing:0.12px;transform:scaleX(1.1200);">Erfasst am</span>
<span class="t" style="left:2991.7px;top:755.5px;font-size:16px;line-height:21px;color:#a1a5b7;letter-spacing:0.28px;transform:scaleX(1.1200);">Fällig am</span>
<span class="t" style="left:3156.0px;top:755.5px;font-size:16px;line-height:21px;color:#a1a5b7;letter-spacing:0.47px;transform:scaleX(1.1200);">Total</span>
<svg style="left:2717.6px;top:783.5px;" width="16.4" height="16.4" viewBox="0 0 16 16"><circle cx="8" cy="8" r="8" fill="#212529"/><path d="M4.300 8.300l2.500 2.500 5-5" fill="none" stroke="#fff" stroke-width="2" stroke-linecap="round" stroke-linejoin="round"/></svg>
<span class="t" style="left:2743.2px;top:780.5px;font-size:16px;line-height:21px;color:#212529;transform:scaleX(1.1149);">Bezahlt</span>
<span class="t" style="left:2836.0px;top:780.5px;font-size:16px;line-height:21px;color:#212529;transform:scaleX(0.9834);">14.05.2024 16:14</span>
<span class="t" style="left:2991.7px;top:780.5px;font-size:16px;line-height:21px;color:#212529;transform:scaleX(1.0517);">22.05.2024 18:00</span>
<span class="t" style="left:3156.0px;top:780.5px;font-size:16px;line-height:21px;color:#212529;transform:scaleX(1.0599);">CHF 55.00</span>
<div style="left:2694.2px;top:826.0px;width:1036.8px;height:107.2px;background:#fff;border-radius:12px;box-shadow:0 2px 6px rgba(30,30,40,.15),0 0 2px rgba(30,30,40,.10);"></div>
<div style="left:2694.2px;top:826.0px;width:5.8px;height:107.2px;background:#6366f1;border-radius:6px 0 0 6px;"></div>
<span class="t" style="left:2717.0px;top:838.2px;font-size:16px;line-height:21px;color:#212529;-webkit-text-stroke:.3px #212529;transform:scaleX(1.0097);">SPS34</span>
<span class="t" style="left:2779.3px;top:838.2px;font-size:16px;line-height:21px;color:#a1a5b7;transform:scaleX(0.9836);">SPS34</span>
<span class="t" style="left:2717.0px;top:874.2px;font-size:16px;line-height:21px;color:#a1a5b7;letter-spacing:0.18px;transform:scaleX(1.1200);">Status</span>
<span class="t" style="left:2836.0px;top:874.2px;font-size:16px;line-height:21px;color:#a1a5b7;letter-spacing:0.12px;transform:scaleX(1.1200);">Erfasst am</span>
<span class="t" style="left:2994.0px;top:874.2px;font-size:16px;line-height:21px;color:#a1a5b7;letter-spacing:0.28px;transform:scaleX(1.1200);">Fällig am</span>
<span class="t" style="left:3153.5px;top:874.2px;font-size:16px;line-height:21px;color:#a1a5b7;letter-spacing:0.47px;transform:scaleX(1.1200);">Total</span>
<svg style="left:2717.6px;top:902.2px;" width="16.4" height="16.4" viewBox="0 0 16 16"><circle cx="8" cy="8" r="8" fill="#212529"/><path d="M4.300 8.300l2.500 2.500 5-5" fill="none" stroke="#fff" stroke-width="2" stroke-linecap="round" stroke-linejoin="round"/></svg>
<span class="t" style="left:2743.2px;top:899.2px;font-size:16px;line-height:21px;color:#212529;transform:scaleX(1.1149);">Bezahlt</span>
<span class="t" style="left:2836.0px;top:899.2px;font-size:16px;line-height:21px;color:#212529;">01.05.2023 16:27</span>
<span class="t" style="left:2994.0px;top:899.2px;font-size:16px;line-height:21px;color:#212529;transform:scaleX(1.0213);">11.05.2023 09:25</span>
<span class="t" style="left:3153.5px;top:899.2px;font-size:16px;line-height:21px;color:#212529;transform:scaleX(0.9911);">CHF 170.00</span>
<div style="left:2694.2px;top:944.8px;width:1036.8px;height:107.2px;background:#fff;border-radius:12px;box-shadow:0 2px 6px rgba(30,30,40,.15),0 0 2px rgba(30,30,40,.10);"></div>
<div style="left:2694.2px;top:944.8px;width:5.8px;height:107.2px;background:#6366f1;border-radius:6px 0 0 6px;"></div>
<span class="t" style="left:2717.0px;top:957.0px;font-size:16px;line-height:21px;color:#212529;-webkit-text-stroke:.3px #212529;transform:scaleX(0.9654);">SPS2</span>
<span class="t" style="left:2768.5px;top:957.0px;font-size:16px;line-height:21px;color:#a1a5b7;transform:scaleX(0.9409);">SPS2</span>
<span class="t" style="left:2717.0px;top:993.0px;font-size:16px;line-height:21px;color:#a1a5b7;letter-spacing:0.18px;transform:scaleX(1.1200);">Status</span>
<span class="t" style="left:2836.0px;top:993.0px;font-size:16px;line-height:21px;color:#a1a5b7;letter-spacing:0.12px;transform:scaleX(1.1200);">Erfasst am</span>
<span class="t" style="left:2993.0px;top:993.0px;font-size:16px;line-height:21px;color:#a1a5b7;letter-spacing:0.28px;transform:scaleX(1.1200);">Fällig am</span>
<span class="t" style="left:3150.9px;top:993.0px;font-size:16px;line-height:21px;color:#a1a5b7;letter-spacing:0.47px;transform:scaleX(1.1200);">Total</span>
<svg style="left:2717.6px;top:1021.0px;" width="16.4" height="16.4" viewBox="0 0 16 16"><circle cx="8" cy="8" r="8" fill="#212529"/><path d="M4.300 8.300l2.500 2.500 5-5" fill="none" stroke="#fff" stroke-width="2" stroke-linecap="round" stroke-linejoin="round"/></svg>
<span class="t" style="left:2743.2px;top:1018.0px;font-size:16px;line-height:21px;color:#212529;transform:scaleX(1.1149);">Bezahlt</span>
<span class="t" style="left:2836.0px;top:1018.0px;font-size:16px;line-height:21px;color:#212529;transform:scaleX(0.9955);">17.06.2022 14:07</span>
<span class="t" style="left:2993.0px;top:1018.0px;font-size:16px;line-height:21px;color:#212529;transform:scaleX(0.9955);">17.06.2022 14:07</span>
<span class="t" style="left:3150.9px;top:1018.0px;font-size:16px;line-height:21px;color:#212529;transform:scaleX(0.9637);">EUR 185.00</span>
<div style="left:2716.0px;top:445.0px;width:153.6px;height:30.9px;background:#fff4e8;border-radius:15.500px;box-shadow:0 2px 5px rgba(50,60,90,.14);"></div>
<svg style="left:2730.0px;top:454.0px;" width="12.0" height="12.0" viewBox="0 0 16 16"><circle cx="8" cy="8" r="8" fill="#f7a30c"/><path d="M8 3.800v5" stroke="#fff" stroke-width="2.200" stroke-linecap="round"/><circle cx="8" cy="11.800" r="1.300" fill="#fff"/></svg>
<span class="t" style="left:2748.4px;top:449.3px;font-size:16px;line-height:21px;color:#f4702a;-webkit-text-stroke:.3px #f4702a;letter-spacing:0.34px;transform:scaleX(1.1200);">Aktualisieren</span>
<div style="left:2664.0px;top:1104.3px;width:1115.3px;height:745.3px;background:#fff;border-radius:14px;box-shadow:0 2px 9px rgba(50,60,90,.15),0 0 1px rgba(50,60,90,.16);overflow:hidden;"></div>
<span class="t" style="left:2691.8px;top:1126.6px;font-size:17.5px;line-height:23px;color:#212529;-webkit-text-stroke:.3px #212529;letter-spacing:0.15px;transform:scaleX(1.1200);">Notizen</span>
<div style="left:2691.8px;top:1170.3px;width:1042.0px;height:1.3px;background:#e5e6ea;"></div>
<div style="left:3762.0px;top:1104.3px;width:17.3px;height:745.3px;background:#f4f4f4;border-radius:0 14px 14px 0;"></div>
<div style="left:3764.0px;top:1122.0px;width:13.2px;height:647.0px;background:#c9c9c9;"></div>
<svg style="left:3766.3px;top:1111.5px;" width="8.5" height="5.0" viewBox="0 0 10 6"><path d="M0 6l5-6 5 6z" fill="#b5b5b5"/></svg>
<svg style="left:3766.3px;top:1837.5px;" width="8.5" height="5.0" viewBox="0 0 10 6"><path d="M0 0l5 6 5-6z" fill="#8a8a8a"/></svg>
<div style="left:2693.7px;top:1203.6px;width:1036.8px;height:55.3px;background:#fff;border-radius:12px;box-shadow:0 2px 6px rgba(30,30,40,.15),0 0 2px rgba(30,30,40,.10);"></div>
<div style="left:2693.7px;top:1203.6px;width:6.3px;height:55.3px;background:#f5b301;border-radius:6px 0 0 6px;"></div>
<span class="t" style="left:2717.0px;top:1222.6px;font-size:16px;line-height:21px;color:#212529;-webkit-text-stroke:.3px #212529;letter-spacing:0.43px;transform:scaleX(1.1200);">Teilnehmer erfasst</span>
<span class="t" style="left:3643.4px;top:1222.3px;font-size:13.5px;line-height:18px;color:#969bb0;transform:scaleX(1.0677);">vor 2 years</span>
<div style="left:2693.7px;top:1269.9px;width:1036.8px;height:55.3px;background:#fff;border-radius:12px;box-shadow:0 2px 6px rgba(30,30,40,.15),0 0 2px rgba(30,30,40,.10);"></div>
<div style="left:2693.7px;top:1269.9px;width:6.3px;height:55.3px;background:#f5b301;border-radius:6px 0 0 6px;"></div>
<span class="t" style="left:2717.0px;top:1288.9px;font-size:16px;line-height:21px;color:#212529;-webkit-text-stroke:.3px #212529;letter-spacing:0.47px;transform:scaleX(1.1200);">Teilnehmer wurde zum Angebot hinzugefügt</span>
<span class="t" style="left:3643.4px;top:1288.6px;font-size:13.5px;line-height:18px;color:#969bb0;transform:scaleX(1.0677);">vor 2 years</span>
<div style="left:2693.7px;top:1336.2px;width:1036.8px;height:55.3px;background:#fff;border-radius:12px;box-shadow:0 2px 6px rgba(30,30,40,.15),0 0 2px rgba(30,30,40,.10);"></div>
<div style="left:2693.7px;top:1336.2px;width:6.3px;height:55.3px;background:#f5b301;border-radius:6px 0 0 6px;"></div>
<span class="t" style="left:2717.0px;top:1355.2px;font-size:16px;line-height:21px;color:#212529;-webkit-text-stroke:.3px #212529;letter-spacing:0.47px;transform:scaleX(1.1200);">Teilnehmer wurde zum Angebot hinzugefügt</span>
<span class="t" style="left:3643.4px;top:1354.9px;font-size:13.5px;line-height:18px;color:#969bb0;transform:scaleX(1.0677);">vor 2 years</span>
<div style="left:2693.7px;top:1402.5px;width:1036.8px;height:55.3px;background:#fff;border-radius:12px;box-shadow:0 2px 6px rgba(30,30,40,.15),0 0 2px rgba(30,30,40,.10);"></div>
<div style="left:2693.7px;top:1402.5px;width:6.3px;height:55.3px;background:#f5b301;border-radius:6px 0 0 6px;"></div>
<span class="t" style="left:2717.0px;top:1421.5px;font-size:16px;line-height:21px;color:#212529;-webkit-text-stroke:.3px #212529;letter-spacing:0.47px;transform:scaleX(1.1200);">Teilnehmer wurde zum Angebot hinzugefügt</span>
<span class="t" style="left:3643.4px;top:1421.2px;font-size:13.5px;line-height:18px;color:#969bb0;transform:scaleX(1.0677);">vor 2 years</span>
<div style="left:2693.7px;top:1468.8px;width:1036.8px;height:55.3px;background:#fff;border-radius:12px;box-shadow:0 2px 6px rgba(30,30,40,.15),0 0 2px rgba(30,30,40,.10);"></div>
<div style="left:2693.7px;top:1468.8px;width:6.3px;height:55.3px;background:#f5b301;border-radius:6px 0 0 6px;"></div>
<span class="t" style="left:2717.0px;top:1487.8px;font-size:16px;line-height:21px;color:#212529;-webkit-text-stroke:.3px #212529;letter-spacing:0.47px;transform:scaleX(1.1200);">Teilnehmer wurde zum Angebot hinzugefügt</span>
<span class="t" style="left:3643.4px;top:1487.5px;font-size:13.5px;line-height:18px;color:#969bb0;transform:scaleX(1.0677);">vor 2 years</span>
<div style="left:2693.7px;top:1535.1px;width:1036.8px;height:55.3px;background:#fff;border-radius:12px;box-shadow:0 2px 6px rgba(30,30,40,.15),0 0 2px rgba(30,30,40,.10);"></div>
<div style="left:2693.7px;top:1535.1px;width:6.3px;height:55.3px;background:#f5b301;border-radius:6px 0 0 6px;"></div>
<span class="t" style="left:2717.0px;top:1554.1px;font-size:16px;line-height:21px;color:#212529;-webkit-text-stroke:.3px #212529;letter-spacing:0.47px;transform:scaleX(1.1200);">Teilnehmer wurde zum Angebot hinzugefügt</span>
<span class="t" style="left:3643.4px;top:1553.8px;font-size:13.5px;line-height:18px;color:#969bb0;transform:scaleX(1.0677);">vor 2 years</span>
<div style="left:2693.7px;top:1601.4px;width:1036.8px;height:55.3px;background:#fff;border-radius:12px;box-shadow:0 2px 6px rgba(30,30,40,.15),0 0 2px rgba(30,30,40,.10);"></div>
<div style="left:2693.7px;top:1601.4px;width:6.3px;height:55.3px;background:#f5b301;border-radius:6px 0 0 6px;"></div>
<span class="t" style="left:2717.0px;top:1620.4px;font-size:16px;line-height:21px;color:#212529;-webkit-text-stroke:.3px #212529;letter-spacing:0.47px;transform:scaleX(1.1200);">Teilnehmer wurde zum Angebot hinzugefügt</span>
<span class="t" style="left:3649.0px;top:1620.1px;font-size:13.5px;line-height:18px;color:#969bb0;transform:scaleX(1.0945);">vor a year</span>
<div style="left:2693.7px;top:1667.7px;width:1036.8px;height:55.3px;background:#fff;border-radius:12px;box-shadow:0 2px 6px rgba(30,30,40,.15),0 0 2px rgba(30,30,40,.10);"></div>
<div style="left:2693.7px;top:1667.7px;width:6.3px;height:55.3px;background:#f5b301;border-radius:6px 0 0 6px;"></div>
<span class="t" style="left:2717.0px;top:1686.7px;font-size:16px;line-height:21px;color:#212529;-webkit-text-stroke:.3px #212529;letter-spacing:0.47px;transform:scaleX(1.1200);">Teilnehmer wurde zum Angebot hinzugefügt</span>
<span class="t" style="left:3649.0px;top:1686.4px;font-size:13.5px;line-height:18px;color:#969bb0;transform:scaleX(1.0945);">vor a year</span>
<div style="left:2693.7px;top:1734.0px;width:1036.8px;height:55.3px;background:#fff;border-radius:12px;box-shadow:0 2px 6px rgba(30,30,40,.15),0 0 2px rgba(30,30,40,.10);"></div>
<div style="left:2693.7px;top:1734.0px;width:6.3px;height:55.3px;background:#f5b301;border-radius:6px 0 0 6px;"></div>
<span class="t" style="left:2717.0px;top:1753.0px;font-size:16px;line-height:21px;color:#212529;-webkit-text-stroke:.3px #212529;letter-spacing:0.43px;transform:scaleX(1.1200);">Participant has been added to the offer</span>
<span class="t" style="left:3649.0px;top:1752.7px;font-size:13.5px;line-height:18px;color:#969bb0;transform:scaleX(1.0945);">vor a year</span>
<div style="left:2693.7px;top:1800.3px;width:1036.8px;height:49.3px;background:#fff;border-radius:12px;box-shadow:0 2px 6px rgba(30,30,40,.15),0 0 2px rgba(30,30,40,.10);border-radius:12px 12px 0 0;"></div>
<div style="left:2693.7px;top:1800.3px;width:6.3px;height:49.3px;background:#f5b301;border-radius:6px 0 0 0px;"></div>
<span class="t" style="left:2717.0px;top:1819.3px;font-size:16px;line-height:21px;color:#212529;-webkit-text-stroke:.3px #212529;letter-spacing:0.47px;transform:scaleX(1.1200);">Teilnehmer wurde zum Angebot hinzugefügt</span>
<span class="t" style="left:3649.0px;top:1819.0px;font-size:13.5px;line-height:18px;color:#969bb0;transform:scaleX(1.0945);">vor a year</span>
<div style="left:0.0px;top:0.0px;width:3801.0px;height:308.7px;background:rgba(0,0,0,.5);"></div>
<div style="left:0.0px;top:308.7px;width:2649.7px;height:781.3px;background:rgba(0,0,0,.5);"></div>
<div style="left:0.0px;top:1090.0px;width:3801.0px;height:818.0px;background:rgba(0,0,0,.5);"></div>
<div style="left:2685.4px;top:467.4px;width:38.4px;height:38.4px;background:#f8aa42;border-radius:10px 0 10px 10px;box-shadow:0 4px 7px rgba(0,0,0,.42);"></div>
<span class="t" style="left:2694.8px;top:470.1px;font-size:26.5px;line-height:34px;color:#3a2305;-webkit-text-stroke:.3px #3a2305;transform:scaleX(1.0189);">D</span>
</div></body></html>
